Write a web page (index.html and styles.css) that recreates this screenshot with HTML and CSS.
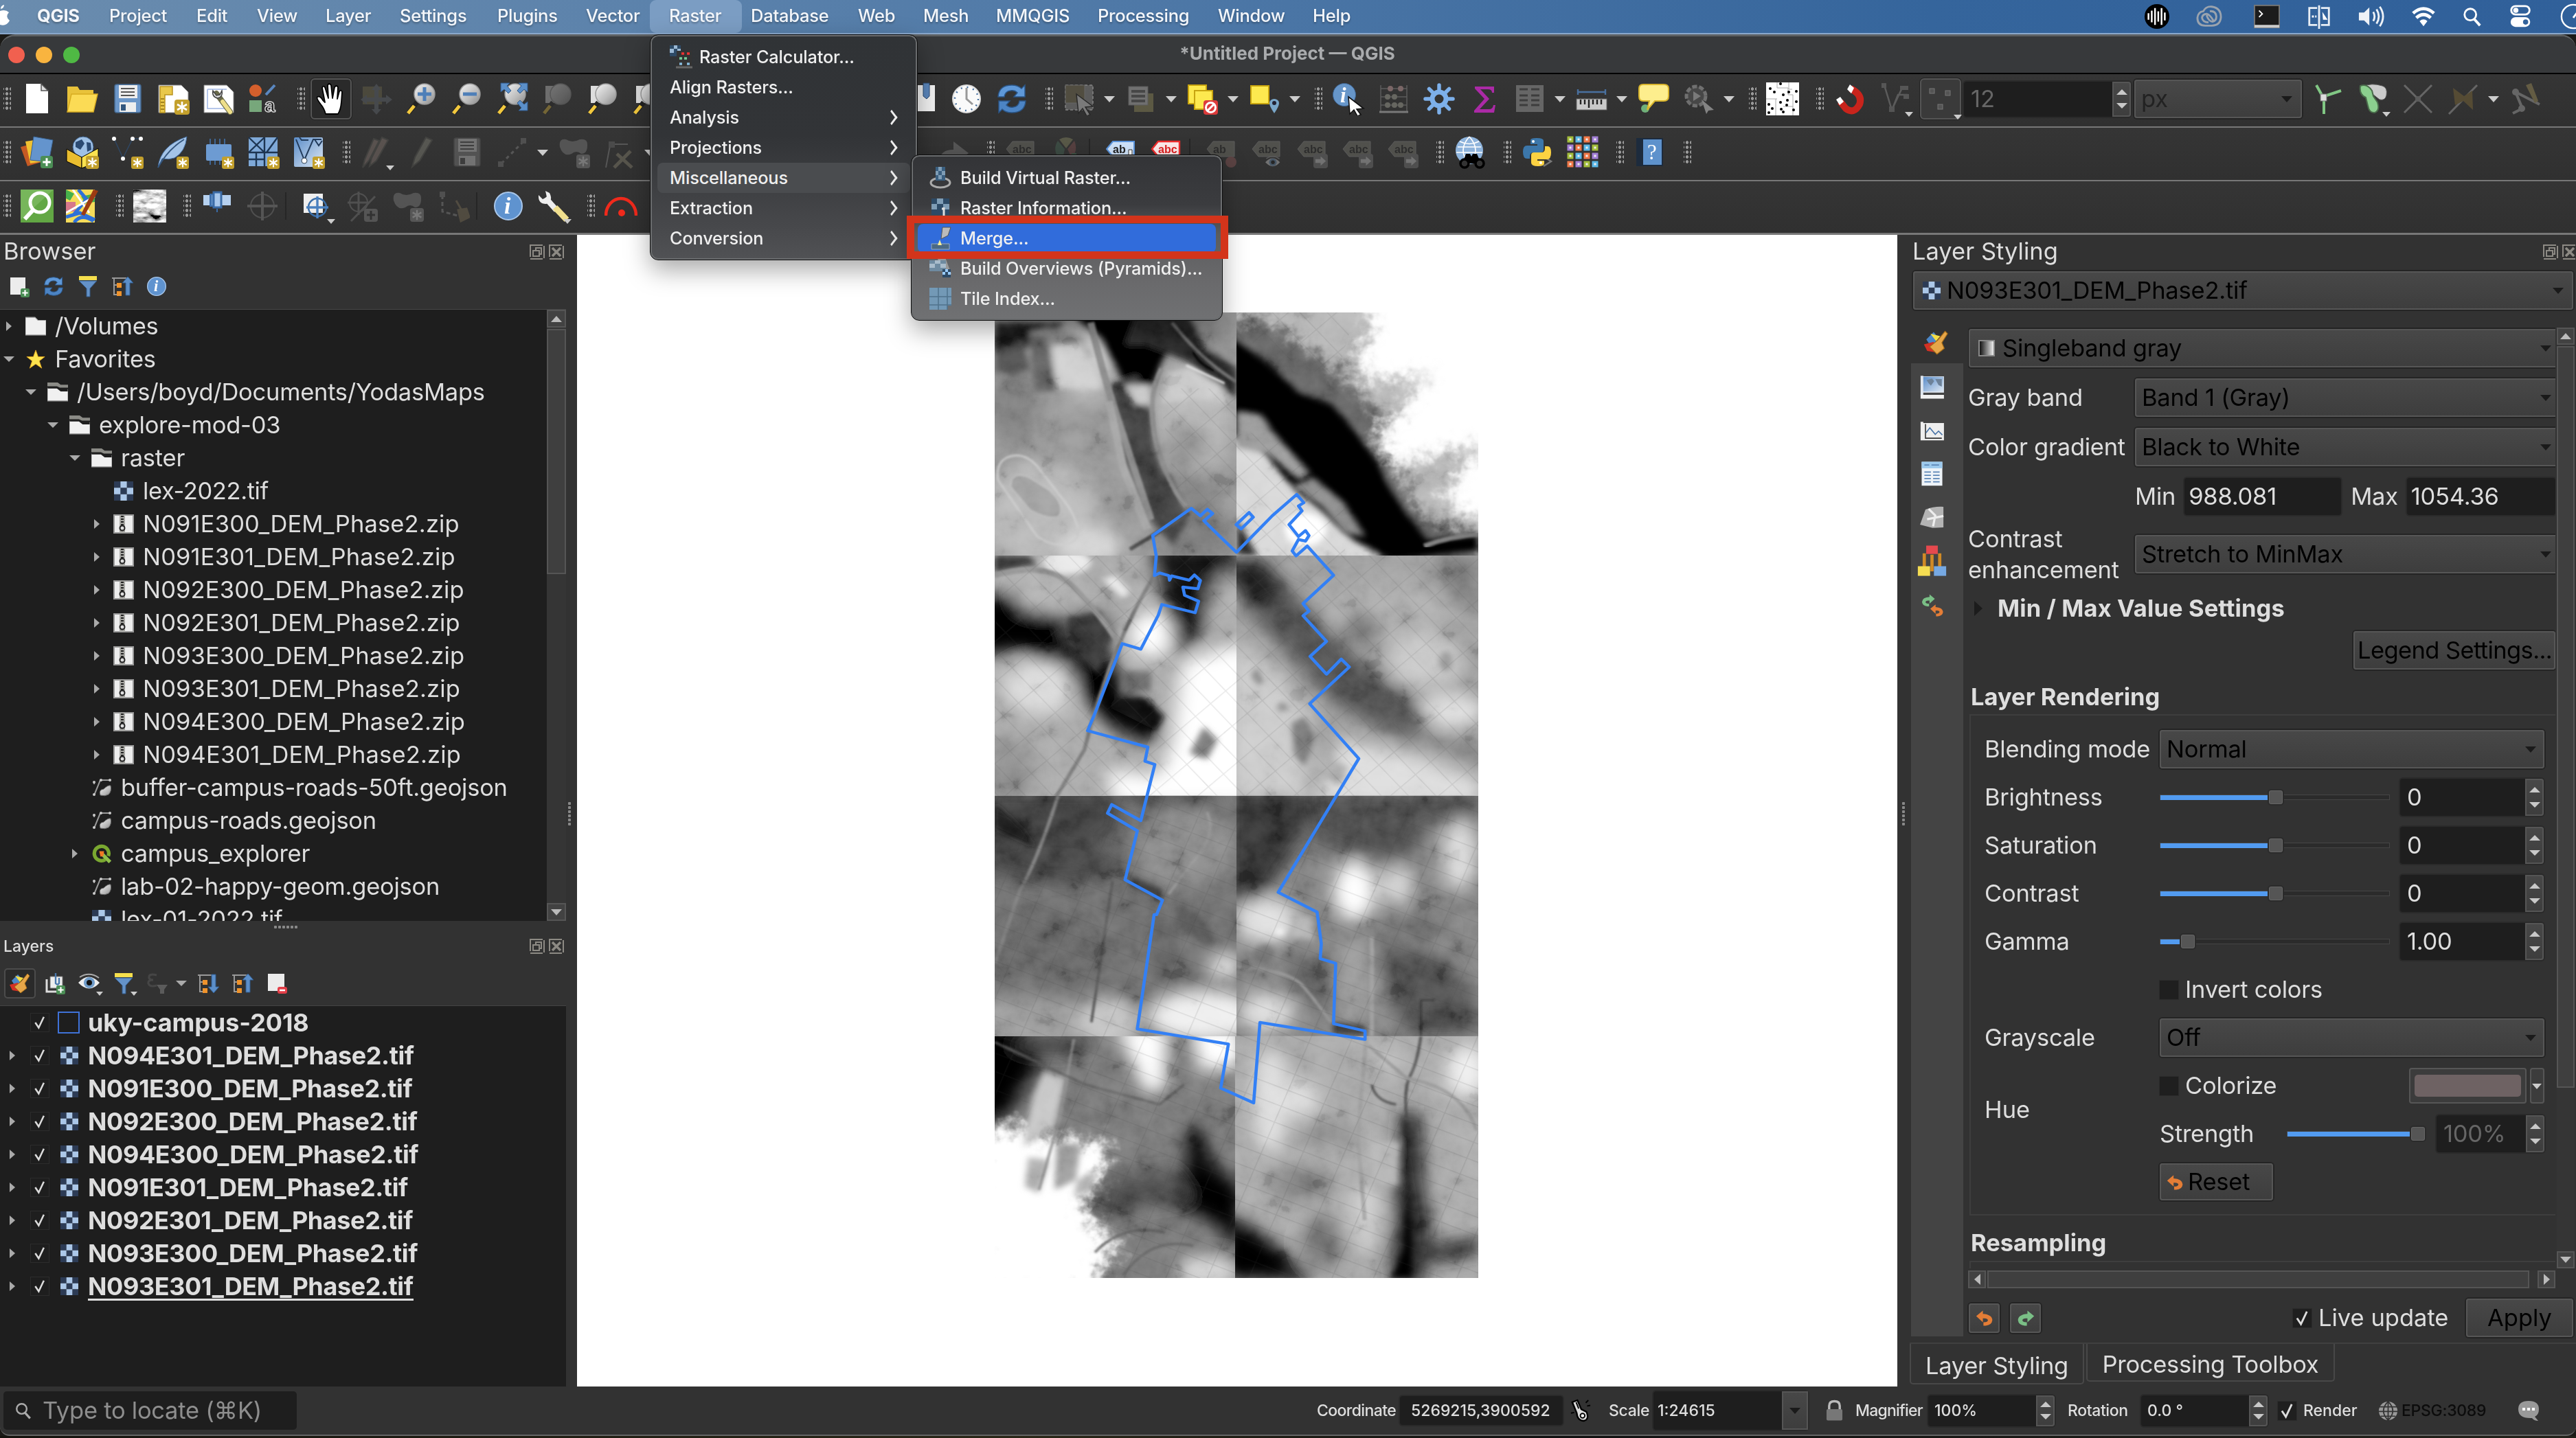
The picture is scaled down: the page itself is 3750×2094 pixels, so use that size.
FILE: index.html
```html
<!DOCTYPE html>
<html lang="en">
<head>
<meta charset="utf-8">
<title>*Untitled Project — QGIS</title>
<link rel="stylesheet" href="styles.css">
</head>
<body>
<svg class="defs" aria-hidden="true">
<defs>
<linearGradient id="gSteel" x1="0" y1="0" x2="1" y2="1"><stop offset="0" stop-color="#f4f4f4"/><stop offset=".6" stop-color="#bbb"/><stop offset="1" stop-color="#888"/></linearGradient>
<linearGradient id="gBlue" x1="0" y1="0" x2="1" y2="1"><stop offset="0" stop-color="#5a8cc8"/><stop offset="1" stop-color="#dfe9f4"/></linearGradient>
</defs>
<symbol id="star6" viewBox="0 0 22 22"><rect width="22" height="22" rx="4" fill="#c3a02c"/><path d="M11 3v16M4 7l14 8M18 7L4 15" stroke="#fff" stroke-width="2.6"/></symbol>
<symbol id="plusb" viewBox="0 0 22 22"><rect width="22" height="22" rx="4" fill="#4b8e55"/><path d="M11 4v14M4 11h14" stroke="#fff" stroke-width="3.6"/></symbol>
<symbol id="new" viewBox="0 0 48 48"><path d="M8 2h22l10 10v33H8z" fill="#fff"/><path d="M30 2v10h10z" fill="#ddd" stroke="#555" stroke-width="1.5"/></symbol>
<symbol id="open" viewBox="0 0 48 48"><path d="M2 6h15l3 5h20v31H2z" fill="#e8c23a"/><path d="M8 17h38l-6 26H2z" fill="#fbdb55" stroke="#d8ac22" stroke-width="1.5"/></symbol>
<symbol id="save" viewBox="0 0 48 48"><rect x="5" y="3" width="38" height="41" rx="3" fill="#6c97c9" stroke="#44688f" stroke-width="1.5"/><rect x="11" y="4" width="27" height="19" fill="#eee"/><path d="M14 9h20M14 14h20M14 19h20" stroke="#555" stroke-width="2"/><rect x="12" y="29" width="24" height="14" fill="#eee"/><rect x="14" y="32" width="7" height="9" fill="#33577f"/></symbol>
<symbol id="layout" viewBox="0 0 48 48"><path d="M3 4h33l10 10v30H3z" fill="#fff" stroke="#888"/><path d="M5 6h18v12H12v26H5z" fill="#e9c84b" stroke="#b8921e" stroke-width="1.5"/><path d="M6 24h5M6 29h5M6 34h5M6 39h5" stroke="#8a6c12" stroke-width="1.4"/><use href="#star6" x="26" y="25" width="22" height="22"/></symbol>
<symbol id="layoutman" viewBox="0 0 48 48"><path d="M3 4h33l10 10v30H3z" fill="#fff" stroke="#888"/><path d="M8 10h28M8 10v28h30" fill="none" stroke="#b6c7ea" stroke-width="2"/><path d="M21 16l20 27" stroke="#6a6a4a" stroke-width="8" stroke-linecap="round"/><path d="M30 28l11 15" stroke="#efdf8a" stroke-width="6" stroke-linecap="round"/><path d="M16 12q-2 9 7 11q8-2 6-11l-3 6-5 1z" fill="#ddd" stroke="#444" stroke-width="1.5"/></symbol>
<symbol id="style" viewBox="0 0 48 48"><circle cx="12" cy="12" r="9" fill="#d55f2c"/><path d="M27 18L40 4" stroke="#5a87c0" stroke-width="4"/><rect x="3" y="26" width="18" height="17" fill="#77a77b"/></symbol>
<symbol id="hand" viewBox="0 0 48 48"><path d="M16 46q-2-8-7-14q-7-9-5-11q4-2 8 5l3 3-4-21q1-4 4-1l5 16-1-19q2-4 5 0l2 19 3-16q3-4 5 0l-1 17 3-11q3-3 4 1l-1 14q-1 12-5 18z" fill="#fff" stroke="#000" stroke-width="1.8" stroke-linejoin="round"/></symbol>
<symbol id="panto" viewBox="0 0 48 48"><rect x="4" y="6" width="28" height="26" fill="#7a7350"/><path d="M24 2l7 9h-4v11h11v-4l9 7-9 7v-4H27v11h4l-7 8-7-8h4V28H10v4l-9-7 9-7v4h11V11h-4z" fill="#6d7580"/></symbol>
<symbol id="lens" viewBox="0 0 48 48"><path d="M17 29L5 44" stroke="#222" stroke-width="7"/><path d="M13 34L4 45" stroke="#f3c93e" stroke-width="5"/><circle cx="28" cy="17" r="15" fill="url(#gSteel)" stroke="#999" stroke-width="1.5"/></symbol>
<symbol id="zin" viewBox="0 0 48 48"><use href="#lens"/><path d="M28 7v20M18 17h20" stroke="#4e7fb8" stroke-width="5"/></symbol>
<symbol id="zout" viewBox="0 0 48 48"><use href="#lens"/><path d="M18 17h20" stroke="#4e7fb8" stroke-width="5"/></symbol>
<symbol id="zfull" viewBox="0 0 48 48"><use href="#lens"/><path d="M7 1h13l-4 4 6 7-4 4-6-6-5 4zM46 1H33l4 4-6 7 4 4 6-6 5 4zM46 41H33l4-4-6-7 4-4 6 6 5-4z" fill="#5b8fc9" stroke="#30598a"/></symbol>
<symbol id="zlayer" viewBox="0 0 48 48"><rect x="6" y="5" width="22" height="25" fill="#ddd"/><use href="#lens"/></symbol>
<symbol id="book" viewBox="0 0 48 48"><path d="M2 4h42v38H2z" fill="#f1f1f1"/><path d="M27 1h9v19l-4 4-5-4z" fill="#5b86bb" stroke="#2d4a70"/></symbol>
<symbol id="clock" viewBox="0 0 48 48"><circle cx="24" cy="24" r="20" fill="#fafafa" stroke="#ddd" stroke-width="2"/><circle cx="24" cy="24" r="17" fill="none" stroke="#456f9f" stroke-width="2.4" stroke-dasharray="2 6.9"/><path d="M24 8v16l9 8" fill="none" stroke="#999" stroke-width="3"/></symbol>
<symbol id="refresh" viewBox="0 0 48 48"><path d="M4 21Q5 4 24 4q9 0 14 5l5-5v17H27l5-6q-4-4-10-3-8 1-9 9z" fill="#5e98d8" stroke="#2b5688" stroke-width="1.5"/><path d="M44 27Q43 44 24 44q-9 0-14-5l-5 5V27h16l-5 6q4 4 10 3 8-1 9-9z" fill="#4c84c4" stroke="#2b5688" stroke-width="1.5"/></symbol>
<symbol id="select" viewBox="0 0 48 48"><rect x="4" y="4" width="40" height="36" fill="#777" stroke="#bbb" stroke-dasharray="4 3" stroke-width="1.5"/><rect x="4" y="4" width="28" height="26" fill="#655f49" stroke="#888"/><path d="M20 17l24 18-11 1 7 11-5 2-6-11-6 7z" fill="#aaa" stroke="#222" stroke-width="1.5"/></symbol>
<symbol id="selform" viewBox="0 0 48 48"><rect x="14" y="16" width="28" height="27" fill="#78734f"/><rect x="6" y="6" width="28" height="27" fill="#999" stroke="#777"/><path d="M10 13h20M10 20h20M10 27h20" stroke="#555" stroke-width="4"/></symbol>
<symbol id="desel" viewBox="0 0 48 48"><rect x="3" y="4" width="26" height="27" fill="#fde94f" stroke="#c8a40f" stroke-width="2"/><rect x="12" y="12" width="26" height="27" fill="#fde94f" stroke="#c8a40f" stroke-width="2"/><rect x="25" y="26" width="21" height="21" rx="4" fill="#dc3b3b"/><circle cx="35.500" cy="36.500" r="7" fill="none" stroke="#fff" stroke-width="3"/><path d="M31 41l9-9" stroke="#fff" stroke-width="3"/></symbol>
<symbol id="selloc" viewBox="0 0 48 48"><rect x="4" y="5" width="26" height="26" fill="#fde94f" stroke="#c8a40f" stroke-width="2"/><path d="M38 45q-7-10-7-15a7 6 0 0 1 14 0q0 5-7 15z" fill="#7aa7c9"/><circle cx="38" cy="30" r="3" fill="#223"/></symbol>
<symbol id="abacus" viewBox="0 0 48 48"><path d="M5 4v40M43 4v40M5 9h38M5 21h38M5 33h38" stroke="#777" stroke-width="1.5"/><path d="M3 43h42" stroke="#aaa" stroke-width="3"/><g fill="#a88"><circle cx="19" cy="9" r="4"/><circle cx="34" cy="9" r="4"/></g><g fill="#8a8a80"><circle cx="15" cy="21" r="4"/><circle cx="25" cy="21" r="4"/><circle cx="15" cy="33" r="4"/><circle cx="25" cy="33" r="4"/><circle cx="34" cy="33" r="4"/></g></symbol>
<symbol id="gear" viewBox="0 0 48 48"><g fill="none" stroke="#7db0ea"><circle cx="24" cy="24" r="10" stroke-width="7"/><path d="M24 4v8M24 36v8M4 24h8M36 24h8M9.500 9.500l6 6M32.500 32.500l6 6M38.500 9.500l-6 6M15.500 32.500l-6 6" stroke-width="5.500" stroke-linecap="round"/></g></symbol>
<symbol id="sigma" viewBox="0 0 48 48"><path d="M10 6h28v9h-3q0-5-6-5H18l13 14-14 15h14q5 0 6-6h3l-2 11H9v-3l15-17L10 9z" fill="#ab2aa6"/></symbol>
<symbol id="table" viewBox="0 0 48 48"><rect x="4" y="4" width="40" height="39" fill="#888"/><path d="M9 10h12M26 10h12M9 19h12M26 19h12M9 26h12M26 26h12M9 33h12M26 33h12" stroke="#454545" stroke-width="3"/></symbol>
<symbol id="ruler" viewBox="0 0 48 48"><path d="M4 14h40M4 10v8M44 10v8" stroke="#49709f" stroke-width="2.4"/><rect x="2" y="24" width="44" height="16" fill="#c9c9c9" stroke="#666"/><path d="M8 25v7M14 25v7M20 25v12M26 25v7M32 25v7M38 25v7" stroke="#222" stroke-width="2.4"/></symbol>
<symbol id="bubble" viewBox="0 0 48 48"><circle cx="12" cy="38" r="6" fill="#6fb07a"/><path d="M9 3h30q7 0 7 6v11q0 7-7 7H26L15 40l3-13h-9q-6 0-6-7V9q0-6 6-6z" fill="#fdee8d" stroke="#d9b52c" stroke-width="2"/></symbol>
<symbol id="action" viewBox="0 0 48 48"><circle cx="20" cy="20" r="14" fill="#555" stroke="#999" stroke-width="5" stroke-dasharray="7 3"/><path d="M16 13l11 7-11 7z" fill="#aaa"/><path d="M28 25l18 15-8 1-3 5z" fill="#bbb"/></symbol>
<symbol id="dots" viewBox="0 0 48 48"><rect width="48" height="48" fill="#fff"/><path d="M33 0v10h5M16 0v8h16v10h7v17M16 24H0M14 24v24M25 35h14v13" fill="none" stroke="#aaa"/><g fill="#000"><circle cx="6" cy="9" r="2"/><circle cx="21" cy="2" r="2"/><circle cx="12" cy="14" r="2"/><circle cx="33" cy="14" r="2"/><circle cx="44" cy="13" r="2"/><circle cx="25" cy="18" r="2"/><circle cx="31" cy="26" r="2"/><circle cx="21" cy="29" r="2"/><circle cx="44" cy="28" r="2"/><circle cx="4" cy="32" r="2"/><circle cx="9" cy="38" r="2"/><circle cx="22" cy="39" r="2"/><circle cx="40" cy="40" r="2"/><circle cx="4" cy="44" r="2"/><circle cx="25" cy="43" r="2"/><circle cx="30" cy="33" r="2"/></g></symbol>
<symbol id="magnet" viewBox="0 0 48 48"><path d="M25 9q18 9 13 23-8 15-20 6l-8-10" fill="none" stroke="#c9241c" stroke-width="10"/><path d="M24 3l6 5-4 8-6-6zM4 25l6-4 5 7-6 5z" fill="#fff"/></symbol>
<symbol id="vx" viewBox="0 0 48 48"><path d="M8 4l11 36L34 8M20 38l8-20h14" fill="none" stroke="#aaa" stroke-width="2.500"/><g fill="#999"><rect x="4" y="1" width="7" height="7"/><rect x="31" y="5" width="12" height="6"/><rect x="36" y="17" width="8" height="7"/><rect x="15" y="35" width="8" height="8"/></g></symbol>
<symbol id="sq3" viewBox="0 0 48 48"><g fill="#555" stroke="#777"><rect x="8" y="9" width="7" height="7"/><rect x="31" y="12" width="7" height="7"/><rect x="20" y="32" width="7" height="7"/></g></symbol>
<symbol id="topo" viewBox="0 0 48 48"><path d="M18 22L8 4M20 20l24-8M19 26v20" stroke="#81c784" stroke-width="4"/><rect x="14" y="17" width="9" height="10" fill="#ddd" stroke="#777"/></symbol>
<symbol id="avoid" viewBox="0 0 48 48"><path d="M10 6q12-6 28-1 8 2 6 14-2 8-10 6z" fill="#ccc" stroke="#555"/><path d="M6 5q10-4 17 7l2 8 6 9q4 12-4 15-8 1-10-10l-3-12Q4 18 6 5z" fill="#8bcf8e" stroke="#4a6b4b" stroke-width="2"/></symbol>
<symbol id="xsnap" viewBox="0 0 48 48"><path d="M4 4l40 40M44 4L4 44" stroke="#888" stroke-width="3"/><circle cx="24" cy="24" r="4" fill="#777"/></symbol>
<symbol id="bolt" viewBox="0 0 48 48"><path d="M44 4L3 46" stroke="#888" stroke-width="3"/><path d="M9 8l16 12 12-8 1 28-14-13-12 6z" fill="#6d5c35"/></symbol>
<symbol id="trace" viewBox="0 0 48 48"><path d="M10 14l35 18M10 14l10 24-14 7" fill="none" stroke="#888" stroke-width="4"/><circle cx="10" cy="14" r="5" fill="#888"/><circle cx="19" cy="38" r="5" fill="#888"/><path d="M25 4l8-3 10 26-5 3z" fill="#84784f"/></symbol>
<symbol id="dsrc" viewBox="0 0 48 48"><path d="M0 16l22-6 8 28-20 6z" fill="#c55a24"/><path d="M7 8l20-3 6 32-19 3z" fill="#f0c232"/><path d="M19 1l28 5-6 32-27-3z" fill="#6494cd" stroke="#38618f"/><use href="#plusb" x="29" y="29" width="18" height="18"/></symbol>
<symbol id="geopk" viewBox="0 0 48 48"><circle cx="25" cy="16" r="15" fill="#9fc1e6" stroke="#3c608b"/><path d="M14 9l9-4 4 6-6 9-7-4zM30 9l6 1 1 10-6 3z" fill="#2b4a72"/><path d="M1 19l22 12v16L1 37z" fill="#e9bd2f" stroke="#000"/><path d="M47 18L23 31v16l24-10z" fill="#fbe24f" stroke="#000"/><use href="#star6" x="29" y="29" width="19" height="19"/></symbol>
<symbol id="shp" viewBox="0 0 48 48"><path d="M4 4l13 28L31 4h12" fill="none" stroke="#2f4661" stroke-width="1.6"/><g fill="#fff"><circle cx="4" cy="4" r="3"/><circle cx="31" cy="4" r="3"/><circle cx="43" cy="4" r="3"/><circle cx="17" cy="33" r="3"/></g><use href="#star6" x="29" y="30" width="18" height="18"/></symbol>
<symbol id="feather" viewBox="0 0 48 48"><path d="M2 46Q5 14 44 1q-2 22-18 31-8 3-18 1z" fill="#a4c4e8" stroke="#41699a"/><path d="M2 46Q16 20 40 5" fill="none" stroke="#35577f" stroke-width="2"/><use href="#star6" x="29" y="30" width="18" height="18"/></symbol>
<symbol id="mem" viewBox="0 0 48 48"><path d="M12 4v38M19 4v38M26 4v38M33 4v38" stroke="#3f6694" stroke-width="2"/><rect x="6" y="12" width="37" height="24" rx="2" fill="#6d9bd2"/><use href="#star6" x="29" y="30" width="18" height="18"/></symbol>
<symbol id="mesh" viewBox="0 0 48 48"><rect x="2" y="2" width="42" height="42" fill="#7fa9d8"/><path d="M2 24h42M25 2v42M2 2l23 22M25 2L2 24M44 2L28 24M2 34h23M13 25v19" stroke="#1d3552" stroke-width="2.4"/><use href="#star6" x="29" y="30" width="18" height="18"/></symbol>
<symbol id="vtile" viewBox="0 0 48 48"><rect x="2" y="2" width="42" height="43" rx="2" fill="url(#gBlue)"/><path d="M5 5l12 30L30 5h12M10 2l3 4h10M32 5l6 9 5-7" fill="none" stroke="#223b5b" stroke-width="2"/><circle cx="17" cy="36" r="4" fill="#fff" stroke="#345"/><use href="#star6" x="29" y="30" width="18" height="18"/></symbol>
<symbol id="pencil" viewBox="0 0 48 48"><path d="M10 45l4-14L30 2l9 4-18 30z" fill="#9a9a8c" stroke="#5e5e58" stroke-width="2"/></symbol>
<symbol id="pencils" viewBox="0 0 48 48"><path d="M4 46l3-12L20 4l8 3-15 29zM14 44l3-12L32 2l9 4-17 30z" fill="#a08c84" stroke="#5e5e58" stroke-width="2"/></symbol>
<symbol id="line" viewBox="0 0 48 48"><path d="M8 40L40 8" stroke="#999" stroke-width="3" stroke-dasharray="5 5"/><rect x="36" y="3" width="8" height="8" fill="#888"/><rect x="3" y="37" width="8" height="8" fill="#888"/></symbol>
<symbol id="blob" viewBox="0 0 48 48"><path d="M3 16Q1 3 12 5q9 6 20 0 12-2 11 9 0 12-9 12-7-6-14 0-12 5-17-10z" fill="#8f948f"/><use href="#star6" x="27" y="27" width="20" height="20"/></symbol>
<symbol id="tools" viewBox="0 0 48 48"><path d="M10 14L4 46M14 12h22" stroke="#999" stroke-width="2"/><rect x="8" y="8" width="9" height="9" fill="#777"/><path d="M16 46l24-24M20 26l22 20" stroke="#a09880" stroke-width="5"/></symbol>
<symbol id="redo" viewBox="0 0 48 48"><path d="M4 40q-2-20 20-20V8l22 17-22 16V31q-12 0-14 9z" fill="#999"/></symbol>
<symbol id="tag" viewBox="0 0 48 48"><path d="M3 19L12 8h31v22H12z" fill="#8a8a7c" stroke="#aaa"/></symbol>
<symbol id="tagb" viewBox="0 0 48 48"><path d="M3 19L12 8h31v22H12z" fill="#cfe3fa" stroke="#5b95dd" stroke-width="2"/><path d="M35 30V20h5v12" stroke="#333" fill="#fff"/></symbol>
<symbol id="tagr" viewBox="0 0 48 48"><path d="M3 19L12 8h31v22H12z" fill="#fdeaea" stroke="#ee2c2c" stroke-width="2.400"/></symbol>
<symbol id="bdg" viewBox="0 0 22 22"><rect width="22" height="22" rx="4" fill="#888"/><path d="M3 8h8V4l8 7-8 7v-4H3z" fill="#eee"/></symbol>
<symbol id="pie" viewBox="0 0 48 48"><path d="M24 18L14 5Q24-1 34 5z" fill="#a0a070"/><path d="M22 19L12 7Q2 22 18 38z" fill="#4f7a63"/><path d="M26 19L36 7q6 14-4 25z" fill="#9a5a5a"/><path d="M32 40V25h7v15z" fill="#4f8a63"/></symbol>
<symbol id="globe" viewBox="0 0 48 48"><circle cx="23" cy="21" r="20" fill="#8fb4dc"/><path d="M6 16h34M4 24h38M23 1q-18 20 0 40M23 1q18 20 0 40M9 8q14 7 28 0" fill="none" stroke="#fff" stroke-width="1.6"/><path d="M13 40l5-14h6l2 4 2-4h6l6 14z" fill="#000"/><circle cx="16" cy="40" r="6" fill="#333" stroke="#000" stroke-width="3.500"/><circle cx="38" cy="40" r="6" fill="#333" stroke="#000" stroke-width="3.500"/></symbol>
<symbol id="python" viewBox="0 0 48 48"><path d="M33 44l11-7-11-7" fill="none" stroke="#777" stroke-width="2.500"/><path d="M14 12V6q0-3 9-3 10 0 10 4v13q0 4-4 4H18q-5 0-5 6v3H9Q3 33 3 23q0-9 6-9h15v-2z" fill="#3c77aa"/><path d="M34 36v4q0 4-9 4-10 0-10-5V28q0-4 4-4h11q5 0 5-6v-3h4q5 0 5 9 0 10-6 10H24v2z" fill="#fcd242"/><circle cx="18" cy="8" r="2" fill="#fff"/><circle cx="29" cy="39" r="2" fill="#fff"/></symbol>
<symbol id="grid16" viewBox="0 0 48 48"><g stroke-width="3" fill="#eee"><path stroke="#a3bd3b" d="M3 2h6v6H3zM39 14h6v6h-6zM3 26h6v6H3zM27 38h6v6h-6z"/><path stroke="#5bb8e8" d="M15 2h6v6h-6zM27 14h6v6h-6zM15 26h6v6h-6zM39 38h6v6h-6z"/><path stroke="#f07848" d="M27 2h6v6h-6zM15 14h6v6h-6zM27 26h6v6h-6zM3 38h6v6H3z"/><path stroke="#a27fd6" d="M39 2h6v6h-6zM3 14h6v6H3zM39 26h6v6h-6zM15 38h6v6h-6z"/></g></symbol>
<symbol id="help" viewBox="0 0 48 48"><rect x="4" y="3" width="39" height="41" fill="#1d2b3d"/><rect x="14" y="5" width="27" height="37" fill="#5e92cc"/></symbol>
<symbol id="osm" viewBox="0 0 48 48"><rect width="48" height="48" fill="#62a744"/><path d="M0 0h48L0 44z" fill="#77b65b"/><circle cx="28" cy="19" r="14" fill="none" stroke="#fff" stroke-width="5"/><path d="M18 30L6 43" stroke="#fff" stroke-width="6"/></symbol>
<symbol id="map" viewBox="0 0 48 48"><rect width="42" height="48" fill="#f6dc5a"/><path d="M0 0l12 6-6 10-6-3zM22 10l20-4v12l-14 2z" fill="#47b14b"/><path d="M0 18h14v14H0z" fill="#d7788b"/><path d="M18 0l12 14-20 24M0 40l20-6 22 10M12 48q10-14 28-2" fill="none" stroke="#2e71d8" stroke-width="5"/><path d="M10 0l24 34M0 34l42-24" stroke="#fff" stroke-width="3"/><path d="M22 36L40 0l7 2-20 36z" fill="#9c3b12"/></symbol>
<symbol id="hill" viewBox="0 0 48 48"><filter id="hf"><feTurbulence type="fractalNoise" baseFrequency=".05 .11" numOctaves="4" seed="9"/><feColorMatrix values="2.400 0 0 0 -.55 2.400 0 0 0 -.55 2.400 0 0 0 -.55 0 0 0 0 1"/></filter><rect width="48" height="48" filter="url(#hf)"/></symbol>
<symbol id="georef" viewBox="0 0 48 48"><rect x="4" y="8" width="12" height="15" fill="#b5d0ef"/><rect x="31" y="8" width="13" height="15" fill="#b5d0ef"/><path d="M19 4h11v22H19z" stroke="#3a6ba6" stroke-width="3" fill="#a8c8ec"/><path d="M14 7h5v17h-5zM24 28v5" stroke="#3a6ba6" stroke-width="2" fill="#5585bd"/></symbol>
<symbol id="target" viewBox="0 0 48 48"><circle cx="24" cy="24" r="17" fill="none" stroke="#888" stroke-width="2"/><path d="M24 3v42M2 24h44" stroke="#999" stroke-width="4"/></symbol>
<symbol id="target2" viewBox="0 0 48 48"><rect x="4" y="6" width="28" height="28" fill="#eee"/><circle cx="24" cy="26" r="13" fill="none" stroke="#3b6ea8" stroke-width="2.500"/><path d="M24 10v32M8 26h32" stroke="#4a80bf" stroke-width="3.400"/></symbol>
<symbol id="targetp" viewBox="0 0 48 48"><circle cx="18" cy="19" r="13" fill="none" stroke="#888" stroke-width="2"/><path d="M18 3v34M2 19h32M7 46L42 10" stroke="#888" stroke-width="3"/><rect x="26" y="28" width="20" height="19" rx="4" fill="#999"/><path d="M36 31v13M30 37h12" stroke="#333" stroke-width="3"/></symbol>
<symbol id="broom" viewBox="0 0 48 48"><path d="M8 8v24l22 6" fill="none" stroke="#999" stroke-width="3" stroke-dasharray="6 4"/><rect x="4" y="3" width="8" height="8" fill="#888"/><path d="M28 16l8 14M31 30l12-2 4 12-12 6z" stroke="#8c7c5c" stroke-width="3" fill="#8c7c5c"/></symbol>
<symbol id="info" viewBox="0 0 48 48"><circle cx="24" cy="24" r="20" fill="#5f93cf" stroke="#a9c7ea" stroke-width="2"/></symbol>
<symbol id="wrench" viewBox="0 0 48 48"><path d="M12 12l16 18" stroke="#eee" stroke-width="8"/><path d="M26 26l17 18" stroke="#f0df8e" stroke-width="9"/><path d="M2 8q-1 13 11 13Q24 17 18 5L12 2l2 9-6 3z" fill="#eee"/></symbol>
<symbol id="arc" viewBox="0 0 48 48"><path d="M2 38a22 25 0 0 1 44 0" fill="none" stroke="#f02a1c" stroke-width="4.500"/><circle cx="25" cy="34" r="5" fill="#f02a1c"/></symbol>
<symbol id="chk" viewBox="0 0 24 24"><path d="M0 0h8v8H0zM16 0h8v8h-8zM8 8h8v8H8zM0 16h8v8H0zM16 16h8v8h-8z" fill="#2c3b55"/><path d="M8 0h8v8H8zM0 8h8v8H0zM16 8h8v8h-8zM8 16h8v8H8z" fill="#abc7e8"/></symbol>
<symbol id="fold" viewBox="0 0 28 26"><path d="M0 1h13l4 4h11v20H0z" fill="#f0f0f0" stroke="#aaa"/></symbol>
<symbol id="foldo" viewBox="0 0 28 26"><path d="M0 0h14l4 3h10v4H17l-4-2H0z" fill="#8b8b86"/><path d="M0 8h13l5 4h10v13H0z" fill="#f0f0f0"/><path d="M0 7v18h28V9" fill="none" stroke="#999"/></symbol>
<symbol id="star" viewBox="0 0 32 32"><path d="M16 1l4 11h11l-9 7 4 12-10-7-10 7 4-12-9-7h11z" fill="#fbe34f" stroke="#e3a51e"/></symbol>
<symbol id="zip" viewBox="0 0 28 28"><path d="M0 1h28v26H0z" fill="#ededed" stroke="#999" stroke-width="2"/><path d="M8 1h8v26H8z" fill="#a8a8a4"/><path d="M12 2v14" stroke="#222" stroke-width="4" stroke-dasharray="2 2"/><circle cx="12" cy="20" r="3.500" fill="#ddd" stroke="#222" stroke-width="2"/></symbol>
<symbol id="gj" viewBox="0 0 28 28"><path d="M3 25L12 3h14M3 8v1" fill="none" stroke="#999" stroke-width="2"/><path d="M12 25q-3-8 5-9 6-6 10-5 2 8-3 13-5 3-12 1z" fill="url(#gSteel)" stroke="#666"/><circle cx="3" cy="6" r="2" fill="#ccc"/><circle cx="3" cy="24" r="2" fill="#ccc"/><circle cx="13" cy="3" r="2" fill="#ccc"/><circle cx="26" cy="3" r="2" fill="#ccc"/></symbol>
<symbol id="qgis" viewBox="0 0 32 32"><path d="M22 26a12 12 0 1 1 5-6" fill="none" stroke="#7aa830" stroke-width="6"/><path d="M17 17l13 13" stroke="#8fc04a" stroke-width="6"/><path d="M12 12h8l-1 8-5 1z" fill="#f07a24"/></symbol>
<symbol id="addl" viewBox="0 0 32 32"><path d="M3 3h22v25H3z" fill="#ececec"/><use href="#plusb" x="18" y="19" width="13" height="13"/></symbol>
<symbol id="filter" viewBox="0 0 32 32"><path d="M3 1h26v6H3z" fill="#f5df4d"/><path d="M3 8h26l-10 11v12h-5V19z" fill="#6492c8" stroke="#335a8a"/></symbol>
<symbol id="tup" viewBox="0 0 32 32"><path d="M1 4h24M4 4v24h10M4 14h10" fill="none" stroke="#999" stroke-width="2"/><path d="M8 11h7v7H8zM8 23h7v7H8z" fill="#ef932c"/><path d="M24 2l8 9h-5v18h-6V11h-5z" fill="#5c8fca" stroke="#2e5a8e"/></symbol>
<symbol id="tdn" viewBox="0 0 32 32"><path d="M1 4h24M4 4v24h10M4 14h10" fill="none" stroke="#999" stroke-width="2"/><path d="M8 11h7v7H8zM8 23h7v7H8z" fill="#ef932c"/><path d="M24 30l8-9h-5V3h-6v18h-5z" fill="#5c8fca" stroke="#2e5a8e"/></symbol>
<symbol id="brush" viewBox="0 0 32 32"><path d="M4 12L13 3l4 5-4 18z" fill="#4a86c8"/><path d="M9 5l12 3-5 6z" fill="#f4dd45"/><path d="M1 18l12-3 4 13-12-2z" fill="#d33124"/><path d="M18 13l9-11 3 3-7 11 3 7-9 7-9-9z" fill="#e6a649" stroke="#a66c17"/></symbol>
<symbol id="grp" viewBox="0 0 32 32"><path d="M9 6h18v17H9z" fill="#eee" stroke="#777"/><path d="M4 10v18h14" fill="none" stroke="#ddd" stroke-width="3"/><path d="M17 1v15q3 3 5 0V8" fill="none" stroke="#4a79ad" stroke-width="2.400"/><use href="#plusb" x="18" y="19" width="13" height="13"/></symbol>
<symbol id="eye" viewBox="0 0 32 32"><path d="M0 15q15-17 31 0-15 17-31 0z" fill="#eee"/><circle cx="16" cy="15" r="8" fill="#6f9cc9"/><circle cx="16" cy="15" r="4" fill="#111"/><path d="M2 7q14-9 28 1" fill="none" stroke="#aaa" stroke-width="2"/></symbol>
<symbol id="eps" viewBox="0 0 32 32"><path d="M14 4Q2 1 3 8q1 3 6 3-8 0-7 5 2 6 12 3" fill="none" stroke="#666" stroke-width="3"/><path d="M14 18h16l-5 7v6h-6v-6z" fill="#999"/></symbol>
<symbol id="rml" viewBox="0 0 32 32"><path d="M3 2h24v25H3z" fill="#ececec"/><rect x="17" y="21" width="14" height="10" rx="3" fill="#e23e48"/><path d="M20 26h8" stroke="#fff" stroke-width="2.500"/></symbol>
<symbol id="dfl" viewBox="0 0 24 24"><path d="M2 2h20v20H2z" fill="none" stroke="#8d8a84" stroke-width="2" stroke-dasharray="18 3"/><path d="M6 10h9v8H6zM10 10V6h8v9h-3" fill="none" stroke="#8d8a84" stroke-width="2"/></symbol>
<symbol id="dcl" viewBox="0 0 24 24"><path d="M2 2h20v20H2z" fill="none" stroke="#8d8a84" stroke-width="2" stroke-dasharray="18 3"/><path d="M6 6l12 12M18 6L6 18" stroke="#8d8a84" stroke-width="3.500"/></symbol>
<symbol id="undo" viewBox="0 0 32 32"><path d="M1 13L13 3v6q16 1 17 11-1 9-12 10h-4v-6q8 0 8-4-1-4-9-3v7z" fill="#e47d36"/></symbol>
<symbol id="redog" viewBox="0 0 32 32"><path d="M31 13L19 3v6Q3 10 2 20q1 9 12 10h4v-6q-8 0-8-4 1-4 9-3v7z" fill="#7abf86"/></symbol>
<symbol id="mglass" viewBox="0 0 32 32"><circle cx="13" cy="13" r="9" fill="none" stroke="currentColor" stroke-width="3"/><path d="M19 20l9 10" stroke="currentColor" stroke-width="4"/></symbol>
<symbol id="tick" viewBox="0 0 24 24"><path d="M4 12l6 9L19 2" fill="none" stroke="#ddd" stroke-width="3"/></symbol>
<symbol id="bubbles" viewBox="0 0 34 32"><path d="M17 2q15 0 15 12 0 8-6 11l5 6q-6 0-9-4Q2 28 2 14 2 2 17 2z" fill="#999"/><path d="M8 14h4M15 14h4M22 14h4" stroke="#fff" stroke-width="4"/></symbol>
</svg>

<header class="menubar">
  <nav class="menus">
    <svg class="apple" viewBox="0 0 14 32"><path d="M0 9q8-3 13 2-6 6 1 12-5 9-14 6zM1 6q0-5 5-6 0 5-5 6z" fill="#fff"/></svg>
    <span class="app">QGIS</span><span>Project</span><span>Edit</span><span>View</span><span>Layer</span><span>Settings</span><span>Plugins</span><span>Vector</span><span class="on">Raster</span><span>Database</span><span>Web</span><span>Mesh</span><span>MMQGIS</span><span>Processing</span><span>Window</span><span>Help</span>
  </nav>
  <div class="tray">
    <svg viewBox="0 0 40 40"><circle cx="20" cy="20" r="19" fill="#000"/><path d="M7 15v10M12 11v18M17 7v26M22 12v16M27 7v26M32 14v12" stroke="#fff" stroke-width="2.600"/></svg>
    <svg viewBox="0 0 40 40"><path d="M14 34q-12 0-12-12 1-9 9-10Q15 4 24 5q14 2 14 16-1 13-14 13H14" fill="none" stroke="#9aa3ae" stroke-width="3"/><path d="M19 29q-9 0-10-7 1-6 7-6 5 1 11 11M21 12q9-1 10 8 0 7-6 8-6-1-9-10" fill="none" stroke="#9aa3ae" stroke-width="3"/></svg>
    <svg viewBox="0 0 40 40"><rect x="1" y="3" width="38" height="34" fill="#1c1c1c" stroke="#777" stroke-width="2"/><path d="M1 35h38" stroke="#ccc" stroke-width="4"/><path d="M8 11l5 5-5 5" fill="none" stroke="#fff" stroke-width="2"/></svg>
    <svg viewBox="0 0 40 40"><path d="M17 7H5v26h12M23 7h12v26H23M20 3v36" fill="none" stroke="#e8eef5" stroke-width="3"/><path d="M9 20h3M14 20h2" stroke="#fff" stroke-width="3"/><path d="M25 13l8 12h-7z" fill="#fff"/></svg>
    <svg viewBox="0 0 40 40"><path d="M1 14h8l8-8v28l-8-8H1z" fill="#eef2f7"/><path d="M23 13q4 7 0 14M28 9q7 11 0 22M33 5q10 15 0 30" fill="none" stroke="#eef2f7" stroke-width="3"/></svg>
    <svg viewBox="0 0 40 40"><path d="M4 15q16-14 32 0M9 22q11-10 22 0" fill="none" stroke="#fff" stroke-width="5"/><path d="M14 27q6-5 12 0l-6 8z" fill="#fff"/></svg>
    <svg viewBox="0 0 32 32" color="#fff"><use href="#mglass"/></svg>
    <svg viewBox="0 0 40 40"><rect x="5" y="4" width="28" height="13" rx="6.500" fill="none" stroke="#fff" stroke-width="3"/><circle cx="12" cy="10.500" r="4" fill="#fff"/><rect x="4" y="21" width="30" height="15" rx="7.500" fill="#fff"/><circle cx="27" cy="28.500" r="4" fill="#33639c"/></svg>
    <svg viewBox="0 0 40 40"><circle cx="20" cy="20" r="18" fill="none" stroke="#fff" stroke-width="2.500"/><path d="M20 22l8-11" stroke="#fff" stroke-width="3"/></svg>
  </div>
</header>

<main class="window">
  <div class="titlebar"><div class="lights"><i></i><i></i><i></i></div><h1>*Untitled Project — QGIS</h1></div>

  <div class="toolbar">
    <b class="grip"></b><svg><use href="#new"/></svg><svg><use href="#open"/></svg><svg><use href="#save"/></svg><svg><use href="#layout"/></svg><svg><use href="#layoutman"/></svg><svg viewBox="0 0 48 48"><use href="#style"/><text class="ia" x="25" y="43">a</text></svg>
    <b class="grip"></b><span class="btn"><svg><use href="#hand"/></svg></span><svg class="off"><use href="#panto"/></svg><svg><use href="#zin"/></svg><svg><use href="#zout"/></svg><svg><use href="#zfull"/></svg><svg class="off"><use href="#zlayer"/></svg><svg><use href="#zlayer"/></svg><svg><use href="#zlayer"/></svg>
    <b class="hidden1"></b><svg><use href="#book"/></svg><svg><use href="#clock"/></svg><svg><use href="#refresh"/></svg>
    <b class="grip"></b><span class="dd"><svg class="dim"><use href="#select"/></svg></span><span class="dd"><svg class="dim"><use href="#selform"/></svg></span><span class="dd"><svg><use href="#desel"/></svg></span><span class="dd"><svg><use href="#selloc"/></svg></span>
    <b class="grip"></b><svg viewBox="0 0 48 48"><circle cx="18" cy="18" r="16.500" fill="#6796c9" stroke="#3d6594"/><text class="is" x="12" y="29" font-size="31">i</text><path d="M24 21l22 17-10 1 6 8-5 2-5-9-6 6z" fill="#fff" stroke="#111" stroke-width="1.6"/></svg><svg class="dim"><use href="#abacus"/></svg><svg><use href="#gear"/></svg><svg><use href="#sigma"/></svg><span class="dd"><svg class="dim"><use href="#table"/></svg></span><span class="dd"><svg><use href="#ruler"/></svg></span><svg><use href="#bubble"/></svg><span class="dd"><svg class="dim"><use href="#action"/></svg></span>
    <b class="grip"></b><svg><use href="#dots"/></svg>
    <b class="grip"></b><svg><use href="#magnet"/></svg><span class="sub"><svg class="off"><use href="#vx"/></svg></span><span class="btn sub"><svg><use href="#sq3"/></svg></span>
    <span class="spin tall"><em>12</em><i class="ud"></i></span><span class="combo px">px</span>
    <svg><use href="#topo"/></svg><span class="sub"><svg><use href="#avoid"/></svg></span><svg class="dim"><use href="#xsnap"/></svg><span class="dd"><svg class="dim"><use href="#bolt"/></svg></span><svg class="dim"><use href="#trace"/></svg>
  </div>
  <div class="toolbar">
    <b class="grip"></b><svg><use href="#dsrc"/></svg><svg><use href="#geopk"/></svg><svg><use href="#shp"/></svg><svg><use href="#feather"/></svg><svg><use href="#mem"/></svg><svg><use href="#mesh"/></svg><svg><use href="#vtile"/></svg>
    <b class="grip"></b><span class="sub"><svg class="off"><use href="#pencils"/></svg></span><svg class="off"><use href="#pencil"/></svg><svg class="off gray"><use href="#save"/></svg><span class="dd"><svg class="off"><use href="#line"/></svg></span><svg class="off gray"><use href="#blob"/></svg><span class="dd"><svg class="off"><use href="#tools"/></svg></span>
    <b class="hidden2"></b><svg class="off"><use href="#redo"/></svg>
    <b class="grip"></b><svg class="off" viewBox="0 0 48 48"><use href="#tag"/><text class="it" x="12" y="25">abc</text></svg><svg class="off"><use href="#pie"/></svg><b class="sep"></b><svg viewBox="0 0 48 48"><use href="#tagb"/><text class="it" x="12" y="25">ab</text></svg><svg viewBox="0 0 48 48"><use href="#tagr"/><text class="it red" x="12" y="25">abc</text></svg><b class="sep"></b><svg class="off" viewBox="0 0 48 48"><use href="#tag"/><text class="it" x="12" y="25">ab</text><circle cx="38" cy="38" r="8" fill="#a66"/></svg><svg class="off" viewBox="0 0 48 48"><use href="#tag"/><text class="it" x="12" y="25">abc</text><use href="#eye" x="20" y="28" width="26" height="22"/></svg><svg class="off" viewBox="0 0 48 48"><use href="#tag"/><text class="it" x="12" y="25">abc</text><use href="#bdg" x="26" y="26" width="21" height="21"/></svg><svg class="off" viewBox="0 0 48 48"><use href="#tag"/><text class="it" x="12" y="25">abc</text><use href="#bdg" x="26" y="26" width="21" height="21"/></svg><svg class="off" viewBox="0 0 48 48"><use href="#tag"/><text class="it" x="12" y="25">abc</text><use href="#bdg" x="26" y="26" width="21" height="21"/></svg>
    <b class="grip"></b><svg><use href="#globe"/></svg><b class="grip"></b><svg><use href="#python"/></svg><svg><use href="#grid16"/></svg><b class="grip"></b><svg viewBox="0 0 48 48"><use href="#help"/><text class="iq" x="20" y="34">?</text></svg><b class="grip"></b>
  </div>
  <div class="toolbar last">
    <b class="grip"></b><svg><use href="#osm"/></svg><svg><use href="#map"/></svg><b class="grip"></b><svg><use href="#hill"/></svg>
    <b class="grip"></b><svg><use href="#georef"/></svg><svg class="off"><use href="#target"/></svg><b class="sep"></b><span class="sub"><svg><use href="#target2"/></svg></span><svg class="off"><use href="#targetp"/></svg><svg class="off gray"><use href="#blob"/></svg><svg class="off"><use href="#broom"/></svg><b class="sep"></b><svg viewBox="0 0 48 48"><use href="#info"/><text class="is" x="18" y="35" font-size="34">i</text></svg><span class="sub"><svg><use href="#wrench"/></svg></span>
    <b class="grip"></b><svg><use href="#arc"/></svg>
  </div>

  <div class="work">
    <aside class="left">
      <section class="browser">
        <div class="dockhead"><h2>Browser</h2><svg><use href="#dfl"/></svg><svg><use href="#dcl"/></svg></div>
        <div class="minibar"><svg><use href="#addl"/></svg><svg viewBox="0 0 48 48"><use href="#refresh"/></svg><svg><use href="#filter"/></svg><svg><use href="#tup"/></svg><svg viewBox="0 0 48 48"><use href="#info"/><text class="is" x="18" y="35" font-size="34">i</text></svg></div>
        <div class="treewrap">
          <ul class="tree">
            <li class="d0"><i class="r"></i><svg><use href="#fold"/></svg>/Volumes</li>
            <li class="d0"><i class="d"></i><svg><use href="#star"/></svg>Favorites</li>
            <li class="d1"><i class="d"></i><svg><use href="#foldo"/></svg>/Users/boyd/Documents/YodasMaps</li>
            <li class="d2"><i class="d"></i><svg><use href="#foldo"/></svg>explore-mod-03</li>
            <li class="d3"><i class="d"></i><svg><use href="#foldo"/></svg>raster</li>
            <li class="d4 tif"><i></i><svg><use href="#chk"/></svg>lex-2022.tif</li>
            <li class="d4"><i class="r"></i><svg><use href="#zip"/></svg>N091E300_DEM_Phase2.zip</li>
            <li class="d4"><i class="r"></i><svg><use href="#zip"/></svg>N091E301_DEM_Phase2.zip</li>
            <li class="d4"><i class="r"></i><svg><use href="#zip"/></svg>N092E300_DEM_Phase2.zip</li>
            <li class="d4"><i class="r"></i><svg><use href="#zip"/></svg>N092E301_DEM_Phase2.zip</li>
            <li class="d4"><i class="r"></i><svg><use href="#zip"/></svg>N093E300_DEM_Phase2.zip</li>
            <li class="d4"><i class="r"></i><svg><use href="#zip"/></svg>N093E301_DEM_Phase2.zip</li>
            <li class="d4"><i class="r"></i><svg><use href="#zip"/></svg>N094E300_DEM_Phase2.zip</li>
            <li class="d4"><i class="r"></i><svg><use href="#zip"/></svg>N094E301_DEM_Phase2.zip</li>
            <li class="d3"><i></i><svg><use href="#gj"/></svg>buffer-campus-roads-50ft.geojson</li>
            <li class="d3"><i></i><svg><use href="#gj"/></svg>campus-roads.geojson</li>
            <li class="d3"><i class="r"></i><svg><use href="#qgis"/></svg>campus_explorer</li>
            <li class="d3"><i></i><svg><use href="#gj"/></svg>lab-02-happy-geom.geojson</li>
            <li class="d3"><i></i><svg><use href="#chk"/></svg>lex-01-2022.tif</li>
          </ul>
          <div class="vbar"><b class="up"></b><i></i><b class="dn"></b></div>
        </div>
      </section>
      <div class="hsplit"></div>
      <section class="layers">
        <div class="dockhead small"><h2>Layers</h2><svg><use href="#dfl"/></svg><svg><use href="#dcl"/></svg></div>
        <div class="minibar"><span class="mbtn"><svg><use href="#brush"/></svg></span><svg><use href="#grp"/></svg><span class="msub"><svg><use href="#eye"/></svg></span><span class="msub"><svg><use href="#filter"/></svg></span><svg class="off"><use href="#eps"/></svg><i class="marr"></i><svg><use href="#tdn"/></svg><svg><use href="#tup"/></svg><svg><use href="#rml"/></svg></div>
        <ul class="llist">
          <li class="uky"><i></i><span class="cb"><svg><use href="#tick"/></svg></span><span class="sw"></span>uky-campus-2018</li>
          <li><i class="r"></i><span class="cb"><svg><use href="#tick"/></svg></span><svg class="k"><use href="#chk"/></svg>N094E301_DEM_Phase2.tif</li>
          <li><i class="r"></i><span class="cb"><svg><use href="#tick"/></svg></span><svg class="k"><use href="#chk"/></svg>N091E300_DEM_Phase2.tif</li>
          <li><i class="r"></i><span class="cb"><svg><use href="#tick"/></svg></span><svg class="k"><use href="#chk"/></svg>N092E300_DEM_Phase2.tif</li>
          <li><i class="r"></i><span class="cb"><svg><use href="#tick"/></svg></span><svg class="k"><use href="#chk"/></svg>N094E300_DEM_Phase2.tif</li>
          <li><i class="r"></i><span class="cb"><svg><use href="#tick"/></svg></span><svg class="k"><use href="#chk"/></svg>N091E301_DEM_Phase2.tif</li>
          <li><i class="r"></i><span class="cb"><svg><use href="#tick"/></svg></span><svg class="k"><use href="#chk"/></svg>N092E301_DEM_Phase2.tif</li>
          <li><i class="r"></i><span class="cb"><svg><use href="#tick"/></svg></span><svg class="k"><use href="#chk"/></svg>N093E300_DEM_Phase2.tif</li>
          <li><i class="r"></i><span class="cb"><svg><use href="#tick"/></svg></span><svg class="k"><use href="#chk"/></svg><u>N093E301_DEM_Phase2.tif</u></li>
        </ul>
      </section>
    </aside>
    <div class="vsplit"></div>

    <section class="canvas">
      <svg class="dem" viewBox="94 29 1380 2939" preserveAspectRatio="none">
        <defs>
          <filter id="b1" x="-50%" y="-50%" width="200%" height="200%"><feGaussianBlur stdDeviation="26"/></filter>
          <filter id="b2" x="-50%" y="-50%" width="200%" height="200%"><feGaussianBlur stdDeviation="9"/></filter>
          <filter id="b3" x="-10%" y="-10%" width="120%" height="120%"><feGaussianBlur stdDeviation="3"/></filter>
          <filter id="rough" x="-10%" y="-10%" width="120%" height="120%"><feGaussianBlur stdDeviation="20" result="g"/><feTurbulence type="fractalNoise" baseFrequency=".03" numOctaves="3" seed="8" result="n"/><feDisplacementMap in="g" in2="n" scale="80" xChannelSelector="R" yChannelSelector="G"/></filter>
          <filter id="mottle" x="0" y="0" width="100%" height="100%"><feTurbulence type="fractalNoise" baseFrequency=".014" numOctaves="5" seed="5"/><feColorMatrix values="1.800 0 0 0 -.4 1.800 0 0 0 -.4 1.800 0 0 0 -.4 0 0 0 0 1"/></filter>
          <pattern id="st" width="58" height="92" patternUnits="userSpaceOnUse" patternTransform="rotate(-42)"><path d="M0 0h58M0 0v92" stroke="#444" stroke-width="6" opacity=".13" fill="none"/></pattern>
          <pattern id="st2" width="110" height="52" patternUnits="userSpaceOnUse" patternTransform="rotate(22)"><path d="M0 0h110M0 0v52" stroke="#333" stroke-width="6" opacity=".13" fill="none"/></pattern>
          <clipPath id="c1"><path d="M94 29h690v740H94z"/></clipPath><clipPath id="c2"><path d="M784 29h690v740H784z"/></clipPath>
          <clipPath id="c3"><path d="M94 769h690v731H94z"/></clipPath><clipPath id="c4"><path d="M784 769h690v731H784z"/></clipPath>
          <clipPath id="c5"><path d="M94 1500h690v732H94z"/></clipPath><clipPath id="c6"><path d="M784 1500h690v732H784z"/></clipPath>
          <clipPath id="c7"><path d="M94 2232h686v736H94z"/></clipPath><clipPath id="c8"><path d="M780 2232h694v736H780z"/></clipPath>
        </defs>
        <g clip-path="url(#c1)">
          <rect x="94" y="29" width="690" height="740" fill="#959595"/>
          <g filter="url(#b1)"><ellipse cx="220" cy="640" rx="170" ry="160" fill="#b6b6b6"/><ellipse cx="350" cy="180" rx="70" ry="110" fill="#c8c8c8"/><ellipse cx="150" cy="300" rx="70" ry="130" fill="#7c7c7c"/><ellipse cx="665" cy="350" rx="110" ry="170" fill="#b4b4b4"/><ellipse cx="640" cy="440" rx="60" ry="70" fill="#8c8c8c"/><ellipse cx="370" cy="740" rx="90" ry="60" fill="#d4d4d4"/><path d="M640 520l80 40 64 210H560z" fill="#777"/></g>
          <g filter="url(#b2)"><path d="M94 60h200l-50 40-110 60-40 40z" fill="#1c1c1c"/><path d="M94 150l80-40 20 90-40 20-60-10z" fill="#4a4a4a"/><path d="M320 29h160l120 40 70 70-90 20-40 100-80-20-60-130-70-60z" fill="#050505"/><path d="M500 29h150l40 90 94 80v90l-140-110-120-50-60 0z" fill="#242424"/><path d="M655 29h129v150l-90-40z" fill="#8b8b8b"/><path d="M190 90l60-15 90 30 30 60-60 30-50-60-50 20z" fill="#8a8a8a"/><path d="M420 250l80-30 40 110 10 120 60 160-60 60-80-180z" fill="#3c3c3c"/><path d="M260 130l80-10 60 140h-130z" fill="#cecece"/><path d="M465 250h70v60h-40z" fill="#c4c4c4"/><path d="M555 540l40-20 50 140-40 80-70-80z" fill="#3c3c3c"/><path d="M190 100h50l30 170h-60z" fill="#5c5c5c"/><path d="M590 210l60-10 90 50 20 60-100-20-90 20z" fill="#c9c9c9"/></g>
          <g filter="url(#b3)" fill="none"><path d="M368 60q40 180 92 340l80 260" stroke="#868686" stroke-width="20"/><path d="M420 300l40 200 70 190" stroke="#a0a0a0" stroke-width="22"/><path d="M570 200q-40 80-20 200 30 140 90 220" stroke="#858585" stroke-width="13"/><path d="M600 60q90 120 184 180" stroke="#666" stroke-width="10"/><path d="M480 750l170-110" stroke="#4a4a4a" stroke-width="12"/><path d="M640 190l110 55" stroke="#e2e2e2" stroke-width="6"/><path d="M660 150q20 40 60 55" stroke="#000" stroke-width="6"/><path d="M104 540q-10-70 50-76 40 0 70 45l80 110q50 90 10 110-50 20-100-20z" stroke="#c8c8c8" stroke-width="6"/><path d="M140 560q0-50 50-30l60 40q50 50 25 80-30 10-80-20z" fill="#9e9e9e" stroke="#bcbcbc" stroke-width="4"/></g>
          <path d="M560 260h224v400L620 620z" fill="url(#st)"/>
        </g>
        <g clip-path="url(#c2)">
          <rect x="784" y="29" width="690" height="740" fill="#fff"/>
          <g filter="url(#rough)"><path d="M700-20h460l10 100-40 90 20 70 130-10 60-20-90 110-60 90 50 90 190-60 60-10-120 150 60 70 110 0v150H700z" fill="#b5b5b5"/><path d="M700 60l170-20 100 80 120 90 80 100 60 20-70 100 110 110 30 80 90 60 90 20v120H700z" fill="#606060"/><path d="M700 380l200-10 130 160 120 130 40 140H700z" fill="#d6d6d6"/></g>
          <path d="M740 80l130 100 90 90 100 40 70 90 60 90 30 70 50 80 60 80 144-15v50l-244 30-110-60-90-90-100-90-80-110-110-40-110-30z" fill="#000" filter="url(#b2)"/>
          <path d="M784 330l70 10 30 50 110 130-30 20-90-80-90-20z" fill="#999" filter="url(#b2)"/>
          <path d="M784 660l60 109h-60z" fill="#222" filter="url(#b2)"/><path d="M940 560l60-30 90 80 60 100-60-10-60-80z" fill="#888" filter="url(#b2)"/><ellipse cx="980" cy="690" rx="60" ry="50" fill="#fff" filter="url(#b2)"/>
          <path d="M1320 740q70-30 154-36" fill="none" stroke="#777" stroke-width="14" filter="url(#b3)"/>
          <path d="M784 29h340l-60 210L784 100zM784 400l110-10 200 230v149H784z" fill="url(#st)"/>
        </g>
        <g clip-path="url(#c3)">
          <rect x="94" y="769" width="690" height="731" fill="#a8a8a8"/>
          <g filter="url(#b1)"><path d="M40 890h130l120 70 100 20 60 140 30 90 100 60-40 80-120-60-100-120-140-110-140 20z" fill="#000"/><ellipse cx="370" cy="990" rx="70" ry="60" fill="#666"/><path d="M540 740h260v110l-90 90-60 120-50 0-20-140z" fill="#111"/><path d="M630 1090l200-60v500H440l-30-110 150 20 40-100z" fill="#fff"/><ellipse cx="220" cy="1170" rx="100" ry="80" fill="#dadada"/><ellipse cx="540" cy="1010" rx="60" ry="70" fill="#fff"/><ellipse cx="130" cy="1430" rx="80" ry="110" fill="#8a8a8a"/><ellipse cx="230" cy="890" rx="70" ry="50" fill="#b5b5b5"/><path d="M720 860l64-60v160l-84-20z" fill="#aaa"/></g>
          <g filter="url(#b2)"><ellipse cx="300" cy="790" rx="70" ry="36" fill="#e8e8e8"/><path d="M440 830l40 50-20 20-60-60z" fill="#e8e8e8"/><path d="M460 1120h80v60l-90 10z" fill="#666"/><path d="M440 1200l80 0 60 60-30 40-130-70z" fill="#111"/><path d="M690 1290l40 40-30 60-50-20z" fill="#777"/><path d="M94 769h100l20 30-120 20z" fill="#333"/><path d="M300 960l90-20 40 70-40 120-70-60z" fill="#333"/></g>
          <g filter="url(#b3)" fill="none"><path d="M550 830q-120 200-200 530l-90 160" stroke="#777" stroke-width="11"/><path d="M94 830q150-50 230 40t120 160" stroke="#8d8d8d" stroke-width="16"/></g>
          <rect x="94" y="769" width="690" height="731" fill="url(#st)"/>
        </g>
        <g clip-path="url(#c4)">
          <rect x="784" y="769" width="690" height="731" fill="#9c9c9c"/>
          <g filter="url(#b1)"><path d="M750 780h110l90 110-30 90-100-50-80-120z" fill="#1a1a1a"/><path d="M820 940l120-60 160 180 250 200-80 80-220-130z" fill="#4c4c4c"/><ellipse cx="1220" cy="940" rx="180" ry="90" fill="#aaa"/><ellipse cx="1140" cy="990" rx="50" ry="50" fill="#6a6a6a"/><ellipse cx="1320" cy="1090" rx="110" ry="80" fill="#c6c6c6"/><ellipse cx="1400" cy="1240" rx="90" ry="50" fill="#e0e0e0"/><path d="M760 1020l130 90 110 140-20 260H760z" fill="#c9c9c9"/><path d="M1080 1330l150 30 250 90v80H1000z" fill="#dcdcdc"/><path d="M1200 1290l290 60v60z" fill="#777"/><path d="M1350 769h130v180l-90-60z" fill="#777"/></g>
          <g filter="url(#b2)"><path d="M940 1280l40-20 30 60-30 90-30-30z" fill="#777"/><ellipse cx="1382" cy="1090" rx="20" ry="30" fill="#909090"/><path d="M1010 1370l90 40-20 60-80-50z" fill="#a8a8a8"/><ellipse cx="915" cy="1230" rx="14" ry="14" fill="#888"/><path d="M840 1110l20 40-10 15-25-30z" fill="#777"/></g>
          <rect x="784" y="769" width="690" height="731" fill="url(#st)"/>
        </g>
        <g clip-path="url(#c5)">
          <rect x="94" y="1500" width="690" height="732" fill="#6a6a6a"/>
          <g filter="url(#b1)"><path d="M60 1480h360l40 120-120 80-280-10z" fill="#3a3a3a"/><ellipse cx="260" cy="1700" rx="200" ry="60" fill="#414141"/><ellipse cx="640" cy="1660" rx="150" ry="120" fill="#888"/><ellipse cx="200" cy="2190" rx="200" ry="80" fill="#9a9a9a"/><ellipse cx="690" cy="2170" rx="160" ry="80" fill="#eee"/><ellipse cx="420" cy="2190" rx="90" ry="80" fill="#c4c4c4"/><ellipse cx="750" cy="2020" rx="50" ry="40" fill="#e5e5e5"/><ellipse cx="240" cy="1950" rx="120" ry="90" fill="#606060"/><ellipse cx="580" cy="1500" rx="160" ry="30" fill="#4a4a4a"/></g>
          <g filter="url(#b2)"><path d="M480 1745l90 40 0 30-90-40z" fill="#333"/><path d="M620 1830l70 50 40 60-30 10-90-60z" fill="#555"/><path d="M540 1880h70v120l-50 60-30-30z" fill="#5e5e5e"/><path d="M94 1520l80 80 40 60-120-60z" fill="#161616"/></g>
          <g filter="url(#b3)" fill="none"><path d="M275 1500q-60 200-110 290l-70 220" stroke="#777" stroke-width="10"/><path d="M700 1550q30 70-40 150l-70 100" stroke="#909090" stroke-width="8"/><path d="M430 1760l-60 430" stroke="#555" stroke-width="8"/></g>
          <rect x="94" y="1500" width="690" height="732" fill="url(#st2)"/>
        </g>
        <g clip-path="url(#c6)">
          <rect x="784" y="1500" width="690" height="732" fill="#808080"/>
          <g filter="url(#b1)"><path d="M760 1480h260l-40 140-110 180-110 60z" fill="#333"/><path d="M1000 1480h480v90l-160 30-60 130-120-40-140-50z" fill="#4a4a4a"/><ellipse cx="1120" cy="1790" rx="60" ry="90" fill="#fff"/><ellipse cx="1240" cy="1770" rx="50" ry="60" fill="#d0d0d0"/><ellipse cx="870" cy="1880" rx="90" ry="70" fill="#e0e0e0"/><ellipse cx="1420" cy="1680" rx="50" ry="110" fill="#ddd"/><path d="M1190 1930l180 60 100 120 0 120h-200l-60-160z" fill="#4c4c4c"/><ellipse cx="1120" cy="2070" rx="50" ry="130" fill="#999"/><ellipse cx="870" cy="2160" rx="80" ry="60" fill="#ddd"/><path d="M930 1980l120 10 0 190-130-110z" fill="#5c5c5c"/><ellipse cx="1300" cy="1900" rx="90" ry="30" fill="#666"/></g>
          <g filter="url(#b2)"><path d="M830 1970l40-20 30 30-30 40-35-20z" fill="#6b6b6b"/><path d="M950 1860l50 10 5 70-65-10z" fill="#b5b5b5"/><ellipse cx="908" cy="1915" rx="14" ry="10" fill="#fff"/><path d="M1320 2150h80v50h-80z" fill="#444"/><path d="M1060 2190l90 10v32l-90-5z" fill="#333"/></g>
          <g filter="url(#b3)" fill="none"><path d="M1170 1930v302" stroke="#999" stroke-width="12"/><path d="M784 2020q150 10 190 60t80 110" stroke="#8c8c8c" stroke-width="9"/><path d="M1310 2232v-110h40" stroke="#1d1d1d" stroke-width="3"/></g>
          <rect x="784" y="1500" width="690" height="732" fill="url(#st2)"/>
        </g>
        <g clip-path="url(#c7)">
          <rect x="94" y="2232" width="686" height="736" fill="#757575"/>
          <g filter="url(#b1)"><path d="M40 2200h150l30 120-90 160-90 10z" fill="#000"/><ellipse cx="260" cy="2260" rx="120" ry="30" fill="#333"/><path d="M440 2200h150l-10 200-60 0z" fill="#fff"/><path d="M650 2200h150v130l-120 10z" fill="#fff"/><path d="M650 2500l40 20 20 90 90 80v200l-110-110-120-40 60-80z" fill="#000"/><path d="M400 2660l200-20 60 90-150 20-120 50z" fill="#444"/><ellipse cx="700" cy="2950" rx="90" ry="50" fill="#d8d8d8"/></g>
          <rect x="94" y="2232" width="686" height="736" fill="url(#st2)"/>
          <g filter="url(#rough)"><path d="M40 2520l140-20 20 30 90 20 130 0-20 110-60 80 60 90 60 40-60 60-20 90H40z" fill="#fff"/></g>
          <g filter="url(#b2)"><path d="M235 2340l60 20-30 150-90 60 30-160z" fill="#c4c4c4"/><path d="M270 2560l70 0-15 110-60 30z" fill="#999"/><path d="M190 2600l60 10-30 100-40-20z" fill="#aaa"/><path d="M330 2670l50-30-10 60-50 20z" fill="#aaa"/></g>
          <g filter="url(#b3)" fill="none" opacity=".8"><path d="M320 2240l-40 240-60 220" stroke="#888" stroke-width="9"/><path d="M94 2250l260 130 210 60 70-60M380 2890q80-90 200-60M460 2960q80-120 200-90" stroke="#5a5a5a" stroke-width="8"/></g>
        </g>
        <g clip-path="url(#c8)">
          <rect x="780" y="2232" width="694" height="736" fill="#a6a6a6"/>
          <g filter="url(#b1)"><ellipse cx="880" cy="2430" rx="50" ry="160" fill="#dedede"/><ellipse cx="960" cy="2420" rx="60" ry="60" fill="#dcdcdc"/><ellipse cx="970" cy="2680" rx="80" ry="50" fill="#777"/><path d="M740 2760l130 80 140 140H740z" fill="#000"/><ellipse cx="1030" cy="2860" rx="60" ry="80" fill="#6a6a6a"/><ellipse cx="1150" cy="2780" rx="50" ry="110" fill="#c9c9c9"/><ellipse cx="1440" cy="2340" rx="60" ry="80" fill="#eee"/><path d="M1250 2460h60l10 200 20 160-20 170h-90l-10-90z" fill="#222"/><ellipse cx="1430" cy="2620" rx="50" ry="140" fill="#aaa"/><path d="M1290 2880l190-40v60l-150 20z" fill="#222"/><ellipse cx="1040" cy="2530" rx="90" ry="18" fill="#6c6c6c"/><ellipse cx="1210" cy="2300" rx="40" ry="60" fill="#bbb"/></g>
          <g filter="url(#b2)"><path d="M1165 2560l85-10-5 140-70-10z" fill="#b4b4b4"/><path d="M1258 2480l12 200-10 200-35 88h60l0-88-10-200-5-190z" fill="#000"/></g>
          <g filter="url(#b3)" fill="none" opacity=".8"><path d="M1155 2232l-25 300 20 260" stroke="#999" stroke-width="12"/><path d="M1310 2232q-10 80-30 120t-10 130" stroke="#444" stroke-width="9"/><path d="M1160 2260l110 100q160 30 200 160" stroke="#8f8f8f" stroke-width="10"/><path d="M1170 2380q10 50 70 60" stroke="#444" stroke-width="8"/></g>
          <rect x="780" y="2232" width="694" height="736" fill="url(#st2)"/>
        </g>
        <rect class="soft" x="94" y="29" width="1380" height="2939" filter="url(#mottle)"/>
        <g fill="none" stroke="#3380f5" stroke-width="9" stroke-linejoin="round">
          <path d="M655 625L545 708l10 62-5 60 15-8 26 8 2 14 6-13 50 13 15-16 17 17-7 25-43-5 5 25 40 18-10 35-95-25-10 32-50 104-53-17-82 223-17 42 172 50-8 43 28 10-40 171-83-49-12 26 85 54-35 149 107 62-17 44h-7l-48 348 260 46-22 134 94 45 18-245 300 52v-26l-90-22 6-184-44-14 3-46-12-96-111-60 230-407-140-167 113-112-23-24-42 46-47-54 47-46-67-78 17-14-17-23 87-86-75-89-32 30-11-15 18-35 20 5 10-17-10-15-20 18-27-36 37-42-10-15 15-10-20-25-70 65-102 111-43-44-50-52 25-22-15-13-20 20z"/>
          <path d="M783 675l37-37 12 14-35 36z"/>
        </g>
      </svg>
    </section>
    <div class="vsplit r"></div>

    <aside class="right">
      <div class="dockhead"><h2>Layer Styling</h2><svg><use href="#dfl"/></svg><svg><use href="#dcl"/></svg></div>
      <div class="combo layer"><svg><use href="#chk"/></svg>N093E301_DEM_Phase2.tif</div>
      <div class="stylebody">
        <div class="vtabs">
          <span class="cur"><svg><use href="#brush"/></svg></span>
          <span><svg viewBox="0 0 48 48"><path d="M3 4h5v36H3zM8 5h38v30H8z" fill="#dfe6ef"/><path d="M8 6h37v27H8z" fill="url(#gBlue)"/><path d="M14 12l10-3 4 5-6 8-4-4zM30 10h12v14l-6-3z" fill="#6d8299"/><path d="M3 39h43v7H3z" fill="#f1f1f1"/></svg></span>
          <span><svg viewBox="0 0 48 48"><path d="M3 8h5v34H3zM8 10h38v32H8z" fill="#eee"/><path d="M12 12v26h30" fill="none" stroke="#333" stroke-width="2"/><path d="M13 28l7-9 10 12 6-6 7 7" fill="none" stroke="#4571a5" stroke-width="2"/></svg></span>
          <span><svg viewBox="0 0 48 48"><path d="M5 3h38v44H5z" fill="#eef3f8"/><path d="M5 3h38v12H5z" fill="#9cc9ec"/><path d="M10 22h12M26 22h12M10 28h12M26 28h12M10 34h12M26 34h12M10 40h12M26 40h12M10 9h9M23 9h14" stroke="#5c86b5" stroke-width="2.400"/></svg></span>
          <span><svg viewBox="0 0 48 48"><path d="M12 10q16-6 33-5v38l-20 1-23-6z" fill="#b4b4b4"/><path d="M18 9l12 12-4 20M45 22l-30 6" stroke="#eee" stroke-width="4" fill="none"/></svg></span>
          <span><svg viewBox="0 0 48 48"><path d="M12 12v26M24 14v26M36 12v26" stroke="#d08a26" stroke-width="5"/><path d="M15 0h18v13H15z" fill="#e6494e"/><path d="M2 32h19v15H2z" fill="#f5dd52"/><path d="M27 32h19v15H27z" fill="#76a9e3"/></svg></span>
          <span><svg viewBox="0 0 48 48"><use href="#redog" x="4" y="1" width="26" height="28"/><use href="#undo" x="20" y="20" width="26" height="27"/></svg></span>
        </div>
        <div class="stylecol">
          <div class="scroller">
            <div class="form">
              <div class="row"><span class="combo grow"><b class="gicon"></b>Singleband gray</span></div>
              <div class="row"><label>Gray band</label><span class="combo grow">Band 1 (Gray)</span></div>
              <div class="row"><label>Color gradient</label><span class="combo grow">Black to White</span></div>
              <div class="row mm"><label></label><em>Min</em><span class="edit mn">988.081</span><em>Max</em><span class="edit mx">1054.36</span></div>
              <div class="row tall2"><label>Contrast enhancement</label><span class="combo grow">Stretch to MinMax</span></div>
              <div class="row mmset"><i></i><strong>Min / Max Value Settings</strong></div>
              <div class="row leg"><span class="push">Legend Settings...</span></div>
              <h3>Layer Rendering</h3>
              <div class="group">
                <div class="row"><label>Blending mode</label><span class="combo grow">Normal</span></div>
                <div class="row"><label>Brightness</label><span class="slider"><i></i></span><span class="spin"><em>0</em><i class="ud"></i></span></div>
                <div class="row"><label>Saturation</label><span class="slider"><i></i></span><span class="spin"><em>0</em><i class="ud"></i></span></div>
                <div class="row"><label>Contrast</label><span class="slider"><i></i></span><span class="spin"><em>0</em><i class="ud"></i></span></div>
                <div class="row"><label>Gamma</label><span class="slider gam"><i></i></span><span class="spin"><em>1.00</em><i class="ud"></i></span></div>
                <div class="row"><label></label><span class="box"></span>Invert colors</div>
                <div class="row"><label>Grayscale</label><span class="combo grow">Off</span></div>
                <div class="hue">
                  <label>Hue</label>
                  <div>
                    <div class="row"><span class="box"></span>Colorize<span class="colorbtn"><b></b></span><span class="cdd"></span></div>
                    <div class="row"><em class="str">Strength</em><span class="slider full"><i></i></span><span class="spin dis"><em>100%</em><i class="ud"></i></span></div>
                  </div>
                </div>
                <div class="row"><label></label><span class="push reset"><svg><use href="#undo"/></svg>Reset</span></div>
              </div>
              <h3 class="res">Resampling</h3>
              <div class="group stub"></div>
            </div>
            <div class="vbar"><b class="up"></b><i></i><b class="dn"></b></div>
          </div>
          <div class="hbar"><b class="lf"></b><i></i><b class="rt"></b></div>
          <div class="actions"><span class="push sq"><svg><use href="#undo"/></svg></span><span class="push sq"><svg><use href="#redog"/></svg></span><span class="box live"><svg><use href="#tick"/></svg></span><em>Live update</em><span class="push apply">Apply</span></div>
        </div>
      </div>
      <div class="tabs"><span class="cur">Layer Styling</span><span>Processing Toolbox</span></div>
    </aside>
  </div>

  <footer class="status">
    <div class="locate"><svg><use href="#mglass"/></svg>Type to locate (⌘K)</div>
    <span class="t1">Coordinate</span><span class="edit co">5269215,3900592</span>
    <svg class="ext" viewBox="0 0 32 36"><path d="M3 5l8-3 6 14 8 4q5 12-4 14-10 0-11-12z" fill="#ddd" stroke="#000" stroke-width="2.500"/><path d="M9 5l4 10" stroke="#000" stroke-width="2"/><circle cx="19" cy="26" r="3.500" fill="#fff" stroke="#000" stroke-width="2"/><path d="M24 6l4-4M26 11l5-1M1 22l5-1" stroke="#000" stroke-width="2"/></svg>
    <span class="t2">Scale</span><span class="edit sc"><em>1:24615</em><i></i></span>
    <svg class="lock" viewBox="0 0 26 32"><path d="M5 15V9q0-7 8-7t8 7v6" fill="none" stroke="#bbb" stroke-width="3.500"/><rect x="1" y="14" width="24" height="17" rx="2" fill="#777"/></svg>
    <span class="t3">Magnifier</span><span class="spin mag"><em>100%</em><i class="ud"></i></span>
    <span class="t4">Rotation</span><span class="spin rot"><em>0.0 °</em><i class="ud"></i></span>
    <span class="box rb"><svg><use href="#tick"/></svg></span><span class="t5">Render</span>
    <svg class="gl" viewBox="0 0 32 32"><circle cx="16" cy="16" r="14" fill="#999"/><path d="M3 10h26M2 17h28M5 24h22M16 2v28M16 2q-14 14 0 28M16 2q14 14 0 28" fill="none" stroke="#333" stroke-width="1.800"/></svg><span class="epsg">EPSG:3089</span>
    <svg class="msg"><use href="#bubbles"/></svg>
  </footer>
</main>
<div class="desk"></div>

<div class="menu raster">
  <div class="mi first"><svg viewBox="0 0 34 34"><path d="M0 0h16v16H0z" fill="#2d4a66"/><path d="M6 0h5v5H6zM0 5h6v6H0zM11 5h5v6h-5z" fill="#9ab8d4"/><path d="M10 8h22v26H10z" fill="#333"/><path d="M17 12h4M25 12h4" stroke="#e33" stroke-width="3.500"/><path d="M14 19h4M21 19h4" stroke="#7c9" stroke-width="3.500"/><path d="M14 27h4M25 27h4" stroke="#8bd" stroke-width="3.500"/><path d="M9 32h24" stroke="#666" stroke-width="3"/></svg>Raster Calculator...</div>
  <div class="mi">Align Rasters...</div><div class="mi more">Analysis</div><div class="mi more">Projections</div><div class="mi more hov">Miscellaneous</div><div class="mi more">Extraction</div><div class="mi more">Conversion</div>
</div>
<div class="menu misc">
  <div class="mi"><svg viewBox="0 0 34 34"><ellipse cx="17" cy="24" rx="14" ry="7" fill="none" stroke="#aaa" stroke-width="3"/><path d="M10 1h14v20H10z" fill="#3a5f80"/><path d="M14 1h5v6h-5zM10 7h4v6h-4zM19 7h5v6h-5zM14 13h5v6h-5z" fill="#7f9db6"/></svg>Build Virtual Raster...</div>
  <div class="mi"><svg viewBox="0 0 34 34"><path d="M4 3h26v24H4z" fill="#2d4a66"/><path d="M12 3h9v8h-9zM4 11h8v8H4zM21 11h9v8h-9z" fill="#7f9db6"/><path d="M22 16v15M19 18h4M18 31h8" stroke="#ddd" stroke-width="3"/></svg>Raster Information...</div>
  <div class="mi sel"><svg viewBox="0 0 34 34"><path d="M20 1h12l-4 12-10 5z" fill="#bbb" stroke="#555"/><path d="M4 25h26v8H4z" fill="#4a6a86" stroke="#9ab"/><path d="M16 19l3 8h-6z" fill="#f6ef9a"/></svg>Merge...</div>
  <div class="mi"><svg viewBox="0 0 34 34"><path d="M12 1h12l9 24-8 4z" fill="#999"/><path d="M1 5h24v16H1z" fill="#6f8ba1"/><path d="M9 5h8v5H9zM1 10h8v6H1zM17 10h8v6h-8z" fill="#a9bccb"/><path d="M20 18h12v12H20z" fill="#2d4a66"/><path d="M24 18h4v4h-4zM20 22h4v4h-4zM28 22h4v4h-4z" fill="#9cf"/></svg>Build Overviews (Pyramids)...</div>
  <div class="mi"><svg viewBox="0 0 34 34"><path d="M1 1h32v26h-6v6H1z" fill="#7399b6"/><path d="M1 14h32M1 26h32M14 1v32M27 1v32" stroke="#4f728c" stroke-width="1.500"/></svg>Tile Index...</div>
</div>
<div class="callout"></div>
</body>
</html>
```
FILE: styles.css
```css
*{box-sizing:border-box}
html,body{margin:0;width:3750px;height:2094px;overflow:hidden;background:#1b1a17}
body{font-family:Inter,"Liberation Sans",sans-serif;font-size:34.500px;color:#dedede;display:flex;flex-direction:column;line-height:1}
ul{list-style:none;margin:0;padding:0}
h1,h2,h3{margin:0;font-weight:400}
em{font-style:normal}
svg{flex:none;display:block}
.defs{position:absolute;width:0;height:0}

/* lettering inside icons */
.ia{font:700 28px "Liberation Sans",sans-serif;fill:#222;stroke:#ddd;stroke-width:1.4px}
.is{font-family:"Liberation Serif",serif;font-style:italic;font-weight:700;fill:#fff}
.it{font:700 16px "Liberation Sans",sans-serif;fill:#222}
.it.red{fill:#e02020}
.iq{font:31px "Liberation Serif",serif;fill:#fff}

/* system menu bar */
.menubar{height:50px;flex:none;display:flex;justify-content:space-between;background:linear-gradient(90deg,#6a8cae 0,#5a81ab 28%,#4a75a5 50%,#35659c 75%,#30609a 100%);border-bottom:2px solid #8aa8cc;color:#f3f6fa;font-size:25.500px;font-weight:500;letter-spacing:-.25px;text-shadow:0 2px 3px rgba(0,0,0,.3)}
.menus{display:grid;grid-template-columns:54px 105px 127px 88px 100px 108px 142px 129px 93px 147px 156px 95px 106px 148px 175px 138px 100px}
.menus span{line-height:46px;white-space:nowrap}
.menus .app{font-weight:700}
.menus .on{background:#7b9dc3;border-radius:9px;padding-left:28px;margin-right:13px}
.apple{width:14px;height:32px;margin-top:7px}
.tray{display:flex;align-items:center;width:630px}
.tray svg{width:40px;height:38px;margin-right:36px}
.tray svg:nth-child(2){margin-right:44px}
.tray svg:nth-child(7){width:30px}
.tray svg:nth-child(9){margin-right:-20px}

/* window frame */
.window{height:2041px;flex:none;display:flex;flex-direction:column;background:#323232;border-radius:22px 22px 14px 14px;border-top:3px solid #5e6163;border-bottom:2px solid #666;overflow:hidden}
.titlebar{height:55px;flex:none;display:flex;align-items:center;background:#37393b;border-bottom:2px solid #000}
.lights{display:flex;gap:16px;padding-left:12px}
.lights i{width:24px;height:24px;border-radius:50%;background:#f1604f}
.lights i:nth-child(2){background:#f9b43f}.lights i:nth-child(3){background:#4fb944}
h1{flex:1;text-align:center;font-size:26px;font-weight:700;color:#a9abad;padding:0 118px 3px 0;letter-spacing:0}

/* tool bars */
.toolbar{height:78px;flex:none;display:flex;align-items:center;padding:0 0 4px;border-bottom:2px solid #777;background:linear-gradient(#353535,#303030)}
.toolbar.last{height:78px;padding-bottom:3px;border-bottom:3px solid #777}
.toolbar>svg,.toolbar span>svg{width:48px;height:48px;margin:0 9px}
.toolbar .off{opacity:.34}.toolbar .dim{opacity:.6}.toolbar .gray{filter:grayscale(1)}
.grip{width:32px;height:36px;flex:none;background:radial-gradient(circle,#999 0,#999 2px,transparent 2.500px) 0 0/6px 7px;background-clip:content-box;padding:0 5px 0 16px}
.grip:first-child{margin-left:-11px}
.sep{width:14px;height:40px;flex:none;border-left:2px solid #262626;background-clip:content-box}
.hidden1{width:331px;flex:none}
.hidden2{width:396px;flex:none}
.dd{width:90px;flex:none;position:relative}
.dd::after{content:"";position:absolute;left:69px;top:20px;border:8px solid transparent;border-top:9px solid #ccc;border-bottom:0}
.sub{width:66px;flex:none;position:relative}
.sub::after{content:"";position:absolute;left:47px;bottom:-2px;border:6px solid transparent;border-top:7px solid #ccc;border-bottom:0}
.btn{width:60px;height:60px;margin:0 3px;flex:none;border-radius:6px;border:2px solid #555;box-shadow:0 0 0 1px #222;display:flex;align-items:center;justify-content:center;background:#3a3a3a}
.toolbar .btn:first-of-type{background:#2a2a2a}
.toolbar .btn svg{margin:0}

/* shared controls */
.combo,.push{background:linear-gradient(#484848,#3d3d3d);box-shadow:inset 0 0 0 2px #565656,0 0 0 2px #242424;border-radius:4px;color:#000;height:56px;display:flex;align-items:center;padding-left:10px;position:relative;white-space:nowrap}
.combo::after{content:"";position:absolute;right:14px;top:24px;border:8px solid transparent;border-top:9px solid #1a1a1a;border-bottom:0}
.edit,.spin{background:#1e1e1e;box-shadow:0 0 0 2px #2a2a2a;border-radius:4px;height:54px;display:flex;align-items:center;padding-left:6px;white-space:nowrap}
.spin{width:209px;padding-left:10px}
.spin em{flex:1}
.ud{width:27px;height:100%;flex:none;background:linear-gradient(#484848,#3d3d3d);box-shadow:inset 0 0 0 2px #555;border-radius:0 4px 4px 0;position:relative}
.ud::before,.ud::after{content:"";position:absolute;left:6px;border:8px solid transparent}
.ud::before{top:22%;border-bottom:8px solid #c8c8c8;border-top:0}
.ud::after{bottom:22%;border-top:8px solid #c8c8c8;border-bottom:0}
.toolbar .tall{width:243px;height:51px;margin:0 5px 0 1px;color:#666;flex:none}
.toolbar .px{width:244px;flex:none;margin-right:4px;color:#222}
.box{width:27px;height:27px;background:#1f1f1f;box-shadow:0 0 0 1px #2b2b2b;flex:none;margin-right:10px}
.box svg{width:23px;height:23px;margin:2px}

/* work area */
.work{flex:1;display:flex;min-height:0}
.left{width:828px;flex:none;display:flex;flex-direction:column}
.dockhead{height:49px;flex:none;display:flex;align-items:center;padding-left:5px}
.dockhead h2{flex:1;font-size:34.500px}
.dockhead svg{width:24px;height:24px;margin-left:4px}
.left .dockhead{padding-right:6px}
.minibar{height:59px;flex:none;display:flex;align-items:center;padding-left:12px;gap:18px}
.browser .minibar{padding-bottom:8px}
.minibar svg{width:32px;height:32px}
.treewrap{height:891px;display:flex;margin-right:4px;background:#1e1e1e;border-top:1px solid #484848}
.browser{height:999px;flex:none}
.tree{flex:1;overflow:hidden;letter-spacing:-.25px}
.tree li{height:48px;display:flex;align-items:center;white-space:nowrap}
.tree i,.llist i{width:26px;height:20px;flex:none;display:flex;justify-content:center;align-items:center;margin-right:11px}
.tree i.r::after,.llist i.r::after{content:"";border:7px solid transparent;border-left:8px solid #aaa;border-right:0}
.tree i.d::after{content:"";border:8px solid transparent;border-top:8px solid #aaa;border-bottom:0}
.tree svg{width:30px;height:28px;margin-right:13px}
.d1{padding-left:32px}.d2{padding-left:64px}.d3{padding-left:96px}.d4{padding-left:128px;letter-spacing:.15px}
.d4.tif{letter-spacing:-.4px}
.vbar{width:28px;flex:none;background:#353535;display:flex;flex-direction:column}
.vbar b{height:26px;background:#424242;border:2px solid #555;display:flex;align-items:center;justify-content:center;flex:none}
.up::after{content:"";border:8px solid transparent;border-bottom:9px solid #bbb;border-top:0}
.dn::after{content:"";border:8px solid transparent;border-top:9px solid #bbb;border-bottom:0}
.lf::after{content:"";border:8px solid transparent;border-right:9px solid #bbb;border-left:0}
.rt::after{content:"";border:8px solid transparent;border-left:9px solid #bbb;border-right:0}
.vbar i{margin-top:2px;height:357px;background:#3f3f3f;border:2px solid #555}
.treewrap .dn{margin-top:auto}
.hsplit{height:16px;flex:none;background:radial-gradient(circle,#888 0,#888 2px,transparent 2.500px) 0 6px/6px 6px repeat-x;margin:0 395px 0 398px}
.layers{flex:1;display:flex;flex-direction:column}
.dockhead.small{height:42px}
.dockhead.small h2{font-size:23px;font-weight:500}
.layers .minibar{padding-left:6px;height:65px}
.mbtn{width:46px;height:44px;border:2px solid #4c4c4c;background:#2a2a2a;border-radius:5px;display:flex;align-items:center;justify-content:center;margin-right:-6px}
.minibar .off{opacity:.4}
.msub{position:relative}
.msub::after{content:"";position:absolute;right:-4px;bottom:-2px;border:5px solid transparent;border-top:6px solid #ccc;border-bottom:0}
.marr{border:8px solid transparent;border-top:8px solid #aaa;border-bottom:0;margin-left:-8px;margin-right:-3px}
.llist{flex:1;background:#1e1e1e;border-top:1px solid #444;margin-right:4px;font-size:36px;font-weight:700;letter-spacing:-.4px}
.llist li{height:48px;display:flex;align-items:center}
.llist li.uky{letter-spacing:-.1px}
.llist i{width:26px;margin:0 13px 0 5px}
.cb{width:28px;height:28px;border:1px solid #2c2c2c;padding:3px;flex:none}
.cb svg{width:20px;height:20px}
.k{width:26px;height:26px;margin:0 14px 0 16px}
.sw{width:32px;height:32px;border:2px solid #3f72d8;margin:0 12px 0 12px}
.llist u{text-decoration:none;box-shadow:0 3px 0 #dedede}
.vsplit{width:12px;flex:none}
.vsplit::after{content:"";display:block;margin:825px 0 0 -2px;width:6px;height:36px;background:radial-gradient(circle,#888 0,#888 2px,transparent 2.500px) 0 0/6px 6px}
.vsplit.r::after{margin-left:6px}
.canvas{width:1922px;flex:none;background:#fff;padding:113px 0 0 608px}
.dem{width:704px;height:1406px}
.soft{mix-blend-mode:soft-light;opacity:.3}

/* layer styling */
.right{flex:1;display:flex;flex-direction:column;padding-left:8px;min-width:0}
.right .dockhead{padding-left:2px;margin-right:-3px}
.right .combo.layer{margin:4px 4px 20px 3px;padding-left:14px;flex:none;letter-spacing:-.2px}
.layer svg{width:26px;height:26px;margin-right:9px}
.stylebody{display:flex;height:1480px;flex:none}
.vtabs{width:76px;height:1475px;flex:none;background:#444;display:flex;flex-direction:column}
.vtabs span{height:64px;display:flex;align-items:center;justify-content:center;padding-right:15px}
.vtabs span:first-child{height:58px;background:#323232;padding:0 4px 2px 0}
.vtabs span:nth-child(2){height:67px}
.vtabs span:nth-child(3){height:61px}
.vtabs svg{width:45px;height:38px}
.vtabs span:nth-child(6) svg{height:46px}
.stylecol{flex:1;display:flex;flex-direction:column;padding-left:7px;min-width:0}
.scroller{height:1376px;flex:none;display:flex}
.form{width:855px;flex:none;overflow:hidden}
.row{height:72px;display:flex;align-items:center;white-space:nowrap;letter-spacing:-.25px}
.row label{width:243px;flex:none}
.form>.row:first-child{padding-left:1px}
.grow{flex:1}
.form>.row .grow{margin-right:-4px}
.gicon{width:24px;height:24px;background:linear-gradient(90deg,#111,#eee);border:2px solid #888;margin:0 11px 0 4px}
.form>.row .grow::after{right:10px}
.mm em{margin-right:13px}
.mn{width:228px;margin-right:14px}.mx{flex:1}
.form .row.tall2{height:96px}
.tall2 label{white-space:normal;line-height:45px}
.form .row.mmset{height:62px;letter-spacing:.1px}
.mmset i{border:11px solid transparent;border-left:12px solid #1c1c1c;border-right:0;margin:0 22px 0 9px}
.form .row.leg{height:60px;justify-content:flex-end}
.leg .push{width:294px;padding-left:6px;letter-spacing:-.6px}
h3{font-weight:700;font-size:34.500px;letter-spacing:0;height:63px;line-height:76px;padding-left:4px}
.group{border:2px solid #3e3e3e;border-right:0;margin-left:2px;padding:14px 16px 14px 20px;height:730px}
.group .row{height:70px}
.group .row label,.hue label{width:255px;flex:none}
.group .combo::after{right:12px}
.slider{width:335px;height:8px;background:#2b2b2b;border:1px solid #454545;position:relative;margin-right:15px;flex:none}
.slider::before{content:"";display:block;width:50%;height:7px;background:#529bf0}
.slider i{position:absolute;left:156px;top:-9px;width:24px;height:24px;background:#555;border:2px solid #2b2b2b;border-radius:5px;box-shadow:inset 0 0 0 1px #666}
.slider.gam::before{width:10%}.slider.gam i{left:28px}
.slider.full{width:202px}.slider.full::before{width:95%}.slider.full i{left:178px}
.hue{display:flex;align-items:center}
.hue>div{flex:1}
.colorbtn{width:171px;height:52px;margin-left:auto;border-radius:4px;background:#3c3c3c;box-shadow:inset 0 0 0 2px #565656;padding:10px 8px}
.colorbtn b{display:block;height:32px;border-radius:5px;background:#6e6263}
.cdd{width:21px;height:52px;margin-left:5px;border-radius:4px;background:#3c3c3c;box-shadow:inset 0 0 0 2px #565656;padding:23px 0 0 3px}
.cdd::after{content:"";display:block;width:0;border:7px solid transparent;border-top:8px solid #ccc;border-bottom:0}
.str{width:185px}
.dis{width:157px;color:#666;margin-left:auto}
.push.reset{width:165px;height:54px}
.reset svg{width:25px;height:25px;margin-right:6px}
h3.res{height:66px;line-height:80px}
.group.stub{height:40px}
.stylecol .vbar{margin:6px 0 0 2px;width:26px}
.stylecol .vbar i{height:1080px}
.stylecol .dn{margin-top:auto}
.stylecol .vbar b{height:25px}
.hbar{width:855px;height:26px;flex:none;display:flex;background:#353535;margin-top:3px}
.hbar b{width:26px;background:#424242;border:2px solid #555;display:flex;align-items:center;justify-content:center}
.hbar i{flex:1;background:#3f3f3f;border:2px solid #555;margin:0 12px 0 2px}
.actions{display:flex;align-items:center;height:75px;padding:11px 4px 0 1px;white-space:nowrap}
.push.sq{width:45px;height:43px;padding:0;justify-content:center;margin-right:15px}
.sq svg{width:26px;height:26px}
.live{margin-left:352px}
.push.apply{width:156px;padding:0;justify-content:center;margin-left:auto}
.tabs{display:flex;flex:1;border-top:2px solid #404040;margin:4px 0 0 -2px;align-items:flex-start;white-space:nowrap}
.tabs span{height:55px;border:2px solid #484848;border-top:0;border-radius:0 0 5px 5px;width:362px;text-align:center;line-height:60px;letter-spacing:-.3px}
.tabs .cur{width:254px;height:59px;line-height:64px;margin-right:3px}

/* status bar */
.status{height:70px;flex:none;display:flex;align-items:center;font-size:23px;font-weight:500;padding:0 0 0 5px;white-space:nowrap}
.locate{width:427px;height:56px;background:#1e1e1e;border-radius:5px;display:flex;align-items:center;font-size:34.500px;font-weight:400;color:#8e8e8e;margin-right:1485px;letter-spacing:-.25px}
.locate svg{width:26px;height:26px;margin:0 15px 0 16px;color:#aaa}
.t1{width:121px;letter-spacing:-.6px}
.co{width:237px;height:42px;padding-left:16px}
.ext{width:30px;height:34px;margin:0 26px 0 11px}
.t2{width:65px;letter-spacing:-.3px}
.sc{width:225px;height:56px}
.sc em{flex:1}
.sc i{width:38px;height:100%;background:linear-gradient(#484848,#3d3d3d);box-shadow:inset 0 0 0 2px #555;padding:24px 0 0 11px}
.sc i::after{content:"";display:block;width:0;border:8px solid transparent;border-top:9px solid #1a1a1a;border-bottom:0}
.lock{width:25px;height:32px;margin:0 18px 0 26px}
.t3{width:106px;letter-spacing:-.8px}
.spin.mag,.spin.rot{width:184px;height:45px;padding-left:9px}
.t4{width:107px;margin-left:19px;letter-spacing:-.4px}
.rb{margin:0 10px 0 15px}
.t5{width:108px}
.gl{width:31px;height:31px}
.epsg{color:#0c0c0c;margin-left:4px;width:168px;letter-spacing:-.3px}
.msg{width:34px;height:32px}
.desk{flex:1;background:linear-gradient(90deg,#15130e,#2a2718 40%,#111 60%,#23211a)}

/* pop-up menus lie over the window */
.menu{position:absolute;border-radius:12px;border:1px solid #0c0c0c;font-size:25.300px;font-weight:500;letter-spacing:-.15px;color:#efefef;box-shadow:inset 0 0 0 2px #6a6c6e,0 14px 36px rgba(0,0,0,.34)}
.raster{left:946px;top:50px;width:390px;height:329px;padding:10px 10px;background:linear-gradient(#303336 0,#323437 45%,#47484b 85%,#515255 100%)}
.misc{left:1326px;top:225px;width:454px;height:242px;padding:11px 9px;background:linear-gradient(#333437 0,#3b3c3f 30%,#5b5c5e 48%,#69696b 75%,#707173 100%)}
.mi{height:44px;display:flex;align-items:center;padding-left:18px;position:relative;border-radius:8px;white-space:nowrap}
.mi svg{width:34px;height:34px;margin-right:9px}
.misc .mi{padding-left:16px}
.misc .mi svg{margin-right:12px}
.more::after{content:"";position:absolute;right:20px;top:15px;width:11px;height:11px;border:solid #eee;border-width:3px 3px 0 0;transform:rotate(45deg) skew(8deg,8deg)}
.hov{background:#4a4c4f}
.misc .sel{background:#316cdb;height:42px;margin:1px 0}
.callout{position:absolute;left:1320px;top:314px;width:468px;height:63px;border:11px solid #d3341b}
```
